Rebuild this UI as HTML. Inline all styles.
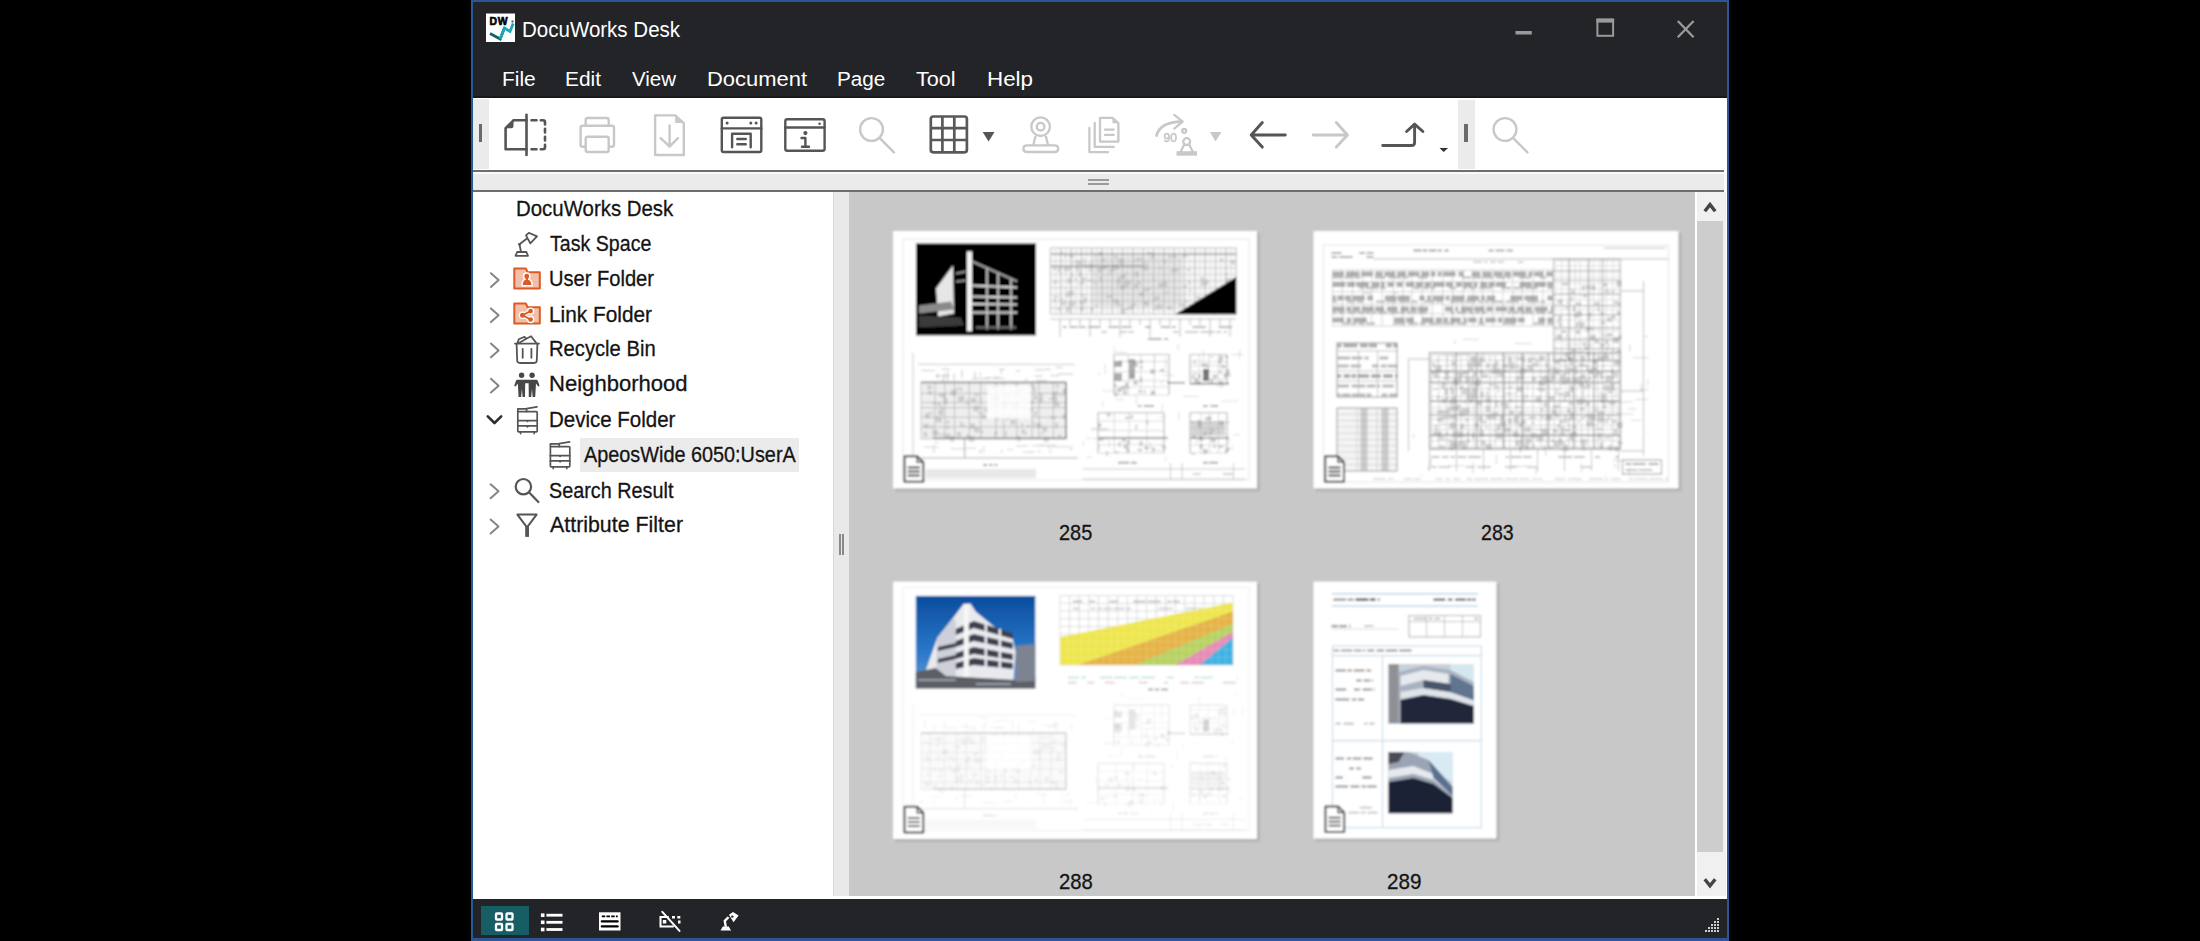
<!DOCTYPE html>
<html><head><meta charset="utf-8"><title>DocuWorks Desk</title>
<style>
html,body{margin:0;padding:0;}
body{width:2200px;height:941px;background:#000;position:relative;overflow:hidden;font-family:"Liberation Sans",sans-serif;}
.b{position:absolute;}
.t{position:absolute;font-family:"Liberation Sans",sans-serif;line-height:1;white-space:nowrap;transform-origin:0 0;}
svg{position:absolute;left:0;top:0;}
</style></head><body>
<div class="b" style="left:471px;top:0;width:1258px;height:941px;background:#2b5797"></div>
<div class="b" style="left:473px;top:2px;width:1254px;height:96px;background:#222428"></div>
<div class="b" style="left:473px;top:96px;width:1254px;height:2px;background:#18191c"></div>
<div class="b" style="left:473px;top:98px;width:1254px;height:72px;background:#fff"></div>
<div class="b" style="left:473px;top:99px;width:16px;height:70px;background:#ebebeb"></div>
<div class="b" style="left:479px;top:124px;width:3px;height:18px;background:#6a6a6a"></div>
<div class="b" style="left:1458px;top:100px;width:17px;height:69px;background:#ebebeb"></div>
<div class="b" style="left:1464px;top:124px;width:4px;height:18px;background:#6a6a6a"></div>
<div class="b" style="left:473px;top:170px;width:1251px;height:2px;background:#6e6e6e"></div>
<div class="b" style="left:473px;top:172px;width:1254px;height:2px;background:#fafafa"></div>
<div class="b" style="left:473px;top:174px;width:1252px;height:16px;background:#ebebeb"></div>
<div class="b" style="left:1088px;top:179px;width:21px;height:2px;background:#9a9a9a"></div>
<div class="b" style="left:1088px;top:183px;width:21px;height:2px;background:#9a9a9a"></div>
<div class="b" style="left:473px;top:190px;width:1251px;height:2px;background:#6e6e6e"></div>
<div class="b" style="left:1724px;top:170px;width:3px;height:22px;background:#fafafa"></div>
<div class="b" style="left:473px;top:192px;width:360px;height:707px;background:#fff"></div>
<div class="b" style="left:833px;top:192px;width:1px;height:704px;background:#d8d8d8"></div>
<div class="b" style="left:834px;top:192px;width:15px;height:704px;background:#e9e9e9"></div>
<div class="b" style="left:839px;top:534px;width:2px;height:21px;background:#8a8a8a"></div>
<div class="b" style="left:842px;top:534px;width:2px;height:21px;background:#8a8a8a"></div>
<div class="b" style="left:849px;top:192px;width:846px;height:704px;background:#c8c8c8"></div>
<div class="b" style="left:1695px;top:192px;width:32px;height:704px;background:#fff"></div>
<div class="b" style="left:1697px;top:192px;width:29px;height:704px;background:#f0f0f0"></div>
<div class="b" style="left:1697px;top:221px;width:26px;height:631px;background:#cdcdcd"></div>
<div class="b" style="left:473px;top:896px;width:1254px;height:3px;background:#fff"></div>
<div class="b" style="left:473px;top:899px;width:1254px;height:39px;background:#222428"></div>
<div class="b" style="left:481px;top:906px;width:48px;height:29px;background:#175d64"></div>
<div class="b" style="left:580px;top:438px;width:219px;height:34px;background:#ebebeb"></div>
<div class="t" style="left:522.36px;top:19.00px;font-size:22px;color:#ffffff;transform:scaleX(0.9324);">DocuWorks Desk</div>
<div class="t" style="left:501.62px;top:69.00px;font-size:20px;color:#ffffff;transform:scaleX(1.0470);">File</div>
<div class="t" style="left:564.63px;top:69.00px;font-size:20px;color:#ffffff;transform:scaleX(1.0457);">Edit</div>
<div class="t" style="left:632.29px;top:69.00px;font-size:20px;color:#ffffff;transform:scaleX(1.0257);">View</div>
<div class="t" style="left:706.74px;top:69.00px;font-size:20px;color:#ffffff;transform:scaleX(1.0973);">Document</div>
<div class="t" style="left:837.35px;top:69.00px;font-size:20px;color:#ffffff;transform:scaleX(1.0339);">Page</div>
<div class="t" style="left:915.97px;top:69.00px;font-size:20px;color:#ffffff;transform:scaleX(1.0800);">Tool</div>
<div class="t" style="left:986.51px;top:69.00px;font-size:20px;color:#ffffff;transform:scaleX(1.1192);">Help</div>
<div class="t" style="left:515.77px;top:198.00px;font-size:22.5px;color:#141414;transform:scaleX(0.9070);-webkit-text-stroke:0.3px #141414;">DocuWorks Desk</div>
<div class="t" style="left:549.61px;top:233.00px;font-size:22.5px;color:#141414;transform:scaleX(0.8715);-webkit-text-stroke:0.3px #141414;">Task Space</div>
<div class="t" style="left:548.89px;top:268.00px;font-size:22.5px;color:#141414;transform:scaleX(0.8932);-webkit-text-stroke:0.3px #141414;">User Folder</div>
<div class="t" style="left:548.93px;top:304.00px;font-size:22.5px;color:#141414;transform:scaleX(0.9255);-webkit-text-stroke:0.3px #141414;">Link Folder</div>
<div class="t" style="left:548.98px;top:338.00px;font-size:22.5px;color:#141414;transform:scaleX(0.8976);-webkit-text-stroke:0.3px #141414;">Recycle Bin</div>
<div class="t" style="left:548.83px;top:373.00px;font-size:22.5px;color:#141414;transform:scaleX(0.9808);-webkit-text-stroke:0.3px #141414;">Neighborhood</div>
<div class="t" style="left:548.66px;top:409.00px;font-size:22.5px;color:#141414;transform:scaleX(0.9109);-webkit-text-stroke:0.3px #141414;">Device Folder</div>
<div class="t" style="left:583.60px;top:444.00px;font-size:22.5px;color:#141414;transform:scaleX(0.8818);-webkit-text-stroke:0.3px #141414;">ApeosWide 6050:UserA</div>
<div class="t" style="left:549.01px;top:480.00px;font-size:22.5px;color:#141414;transform:scaleX(0.8803);-webkit-text-stroke:0.3px #141414;">Search Result</div>
<div class="t" style="left:550.20px;top:514.00px;font-size:22.5px;color:#141414;transform:scaleX(0.9497);-webkit-text-stroke:0.3px #141414;">Attribute Filter</div>
<div class="t" style="left:1059.20px;top:522.00px;font-size:22.5px;color:#141414;transform:scaleX(0.8861);-webkit-text-stroke:0.3px #141414;">285</div>
<div class="t" style="left:1480.52px;top:522.00px;font-size:22.5px;color:#141414;transform:scaleX(0.8691);-webkit-text-stroke:0.3px #141414;">283</div>
<div class="t" style="left:1058.99px;top:871.00px;font-size:22.5px;color:#141414;transform:scaleX(0.9001);-webkit-text-stroke:0.3px #141414;">288</div>
<div class="t" style="left:1387.47px;top:871.00px;font-size:22.5px;color:#141414;transform:scaleX(0.9172);-webkit-text-stroke:0.3px #141414;">289</div>
<svg width="2200" height="941" viewBox="0 0 2200 941">
<defs><filter id="bl" x="-5%" y="-5%" width="110%" height="110%"><feGaussianBlur stdDeviation="1.0"/></filter></defs>
<g filter="url(#bl)">
<rect x="895" y="233" width="364" height="257.5" fill="#a2a2a2"/>
<rect x="896" y="234" width="364" height="257.5" fill="#b4b4b4" opacity="0.6"/>
<rect x="893" y="231" width="364" height="257.5" fill="#fff"/>
<g transform="translate(893 231)">
<rect x="10" y="8" width="346" height="241" fill="none" stroke="#e6e6e6" stroke-width="1"/>
<rect x="23" y="12.4" width="120" height="92" fill="#050505"/>
<g transform="translate(23 12.4)"><path d="M20 45 L37 22 L38 70 L22 73 Z" fill="#e6e6e6"/><path d="M3 62 L35 58 L38 66 L3 70 Z" fill="#8a8a8a"/><path d="M3 72 L45 74 L48 82 L3 84 Z" fill="#3a3a3a"/><path d="M56 42 L101 44 M56 53 L101 54 M56 60.5 L101 61 M56 69 L101 69" stroke="#e0e0e0" stroke-width="2" fill="none"/><path d="M71 24 V86 M82 29 V86 M95 35 V86" stroke="#c8c8c8" stroke-width="1.8" fill="none"/><path d="M56 18 L101 38" stroke="#aaa" stroke-width="1.8" fill="none"/><rect x="51" y="8" width="5" height="80" fill="#f4f4f4"/><path d="M60 84 H100" stroke="#777" stroke-width="2"/><path d="M40 30 L50 28 M40 38 L50 37" stroke="#aaa" stroke-width="1.5"/></g>
<path d="M157.4 17.0V83.3M167.7 17.0V83.3M178.0 17.0V83.3M188.4 17.0V83.3M198.7 17.0V83.3M209.0 17.0V83.3M219.3 17.0V83.3M229.7 17.0V83.3M240.0 17.0V83.3M250.3 17.0V83.3M260.6 17.0V83.3M270.9 17.0V83.3M281.3 17.0V83.3M291.6 17.0V83.3M301.9 17.0V83.3M312.2 17.0V83.3M322.6 17.0V83.3M332.9 17.0V83.3M343.2 17.0V83.3M157.4 17.0H343.2M157.4 23.6H343.2M157.4 30.3H343.2M157.4 36.9H343.2M157.4 43.5H343.2M157.4 50.1H343.2M157.4 56.8H343.2M157.4 63.4H343.2M157.4 70.0H343.2M157.4 76.7H343.2M157.4 83.3H343.2" stroke="#9a9a9a" stroke-width="0.7" opacity="0.75" fill="none"/>
<path d="M157.4 17.0V83.3M162.6 17.0V83.3M167.7 17.0V83.3M172.9 17.0V83.3M178.0 17.0V83.3M183.2 17.0V83.3M188.4 17.0V83.3M193.5 17.0V83.3M198.7 17.0V83.3M203.8 17.0V83.3M209.0 17.0V83.3M214.2 17.0V83.3M219.3 17.0V83.3M224.5 17.0V83.3M229.7 17.0V83.3M234.8 17.0V83.3M240.0 17.0V83.3M245.1 17.0V83.3M250.3 17.0V83.3M255.5 17.0V83.3M260.6 17.0V83.3M265.8 17.0V83.3M270.9 17.0V83.3M276.1 17.0V83.3M281.3 17.0V83.3M286.4 17.0V83.3M291.6 17.0V83.3M296.8 17.0V83.3M301.9 17.0V83.3M307.1 17.0V83.3M312.2 17.0V83.3M317.4 17.0V83.3M322.6 17.0V83.3M327.7 17.0V83.3M332.9 17.0V83.3M338.0 17.0V83.3M343.2 17.0V83.3M157.4 17.0H343.2M157.4 20.3H343.2M157.4 23.6H343.2M157.4 26.9H343.2M157.4 30.3H343.2M157.4 33.6H343.2M157.4 36.9H343.2M157.4 40.2H343.2M157.4 43.5H343.2M157.4 46.8H343.2M157.4 50.1H343.2M157.4 53.5H343.2M157.4 56.8H343.2M157.4 60.1H343.2M157.4 63.4H343.2M157.4 66.7H343.2M157.4 70.0H343.2M157.4 73.4H343.2M157.4 76.7H343.2M157.4 80.0H343.2M157.4 83.3H343.2" stroke="#b0b0b0" stroke-width="0.5" opacity="0.6" fill="none"/>
<path d="M190.2 27.0h1.8v5.0h-1.8zM183.3 34.9h3.3v5.4h-3.3zM174.5 47.0h4.0v5.5h-4.0zM307.5 71.8h2.8v3.4h-2.8zM224.6 73.1h5.8v2.2h-5.8zM191.7 33.9h2.6v3.7h-2.6zM266.0 35.8h1.5v3.4h-1.5zM226.5 54.0h5.8v4.6h-5.8zM252.8 57.1h4.5v1.7h-4.5zM321.9 66.8h5.4v5.1h-5.4zM230.6 43.9h2.0v4.4h-2.0zM171.2 24.0h2.4v2.2h-2.4zM221.2 23.2h1.5v2.2h-1.5zM178.3 41.8h1.6v5.4h-1.6zM270.5 28.9h2.6v3.1h-2.6zM225.5 27.4h5.3v6.0h-5.3zM243.9 49.0h1.9v2.0h-1.9zM221.7 35.9h5.2v2.2h-5.2zM164.2 77.1h3.9v2.2h-3.9zM257.8 21.6h3.9v5.9h-3.9zM315.4 61.8h2.7v3.2h-2.7zM190.1 66.3h3.9v5.0h-3.9zM219.3 33.4h5.2v5.9h-5.2zM313.5 68.4h5.2v4.8h-5.2zM200.8 51.1h3.1v1.6h-3.1zM165.0 36.8h2.7v4.6h-2.7zM332.2 46.8h5.7v5.9h-5.7zM331.9 41.9h2.5v2.5h-2.5zM195.4 32.3h4.3v5.6h-4.3zM311.3 48.8h4.4v5.1h-4.4zM175.3 59.6h5.6v5.0h-5.6zM295.0 48.7h2.3v5.1h-2.3zM219.9 68.0h5.9v3.3h-5.9zM232.2 76.8h4.8v2.3h-4.8zM182.9 29.1h5.6v5.1h-5.6zM186.3 69.6h5.9v4.5h-5.9zM223.1 52.9h2.1v1.6h-2.1zM334.8 59.0h3.9v5.7h-3.9zM238.1 72.3h5.2v2.4h-5.2zM205.3 37.6h2.6v4.1h-2.6zM206.7 45.1h2.1v5.6h-2.1zM223.7 47.5h4.1v5.6h-4.1zM235.7 75.1h3.8v3.9h-3.8zM254.2 21.1h3.5v2.3h-3.5zM160.7 68.0h2.3v3.6h-2.3zM290.5 53.4h3.0v3.8h-3.0zM260.0 67.1h2.0v4.0h-2.0zM204.7 36.6h5.0v3.8h-5.0zM261.1 65.6h5.6v3.5h-5.6zM270.3 50.3h3.8v4.6h-3.8zM241.4 52.0h3.7v5.7h-3.7zM285.9 72.6h5.7v2.7h-5.7zM260.7 76.6h5.3v2.1h-5.3zM181.9 46.5h1.8v2.6h-1.8zM173.2 60.2h5.0v5.5h-5.0zM187.8 63.0h4.5v2.1h-4.5zM318.9 78.1h2.5v5.8h-2.5zM231.7 49.2h6.0v5.2h-6.0zM189.1 45.9h3.8v3.0h-3.8zM195.2 39.1h4.7v1.6h-4.7zM259.7 46.4h1.6v3.0h-1.6zM272.3 50.7h1.8v5.9h-1.8zM301.9 78.3h2.0v2.7h-2.0zM167.1 66.7h2.7v2.1h-2.7zM236.0 74.7h5.2v2.7h-5.2zM186.9 75.2h4.1v4.7h-4.1zM176.1 23.5h4.6v3.4h-4.6zM173.0 76.3h4.4v5.1h-4.4zM175.1 71.4h1.8v5.4h-1.8zM241.7 40.3h4.0v5.7h-4.0zM208.2 27.8h3.9v2.6h-3.9zM179.7 29.7h1.7v2.4h-1.7zM216.2 38.3h4.9v2.8h-4.9zM250.0 30.7h3.1v1.6h-3.1zM205.1 20.9h4.8v4.0h-4.8zM194.1 48.5h5.7v2.0h-5.7zM307.4 45.9h3.7v5.3h-3.7zM230.8 50.4h4.6v5.9h-4.6zM221.7 69.9h4.7v4.4h-4.7zM232.8 40.9h1.7v2.1h-1.7zM172.7 64.5h2.7v2.2h-2.7zM175.2 70.5h5.4v4.5h-5.4zM210.7 34.5h2.8v3.6h-2.8zM188.4 46.7h2.7v5.8h-2.7zM335.1 52.8h2.6v5.8h-2.6zM215.7 41.4h1.5v3.2h-1.5zM245.4 50.2h2.4v3.8h-2.4zM160.9 35.9h1.9v3.3h-1.9zM167.5 21.3h2.9v2.5h-2.9zM265.4 51.8h4.9v4.5h-4.9zM288.9 72.7h3.3v3.0h-3.3zM337.3 29.0h4.8v4.4h-4.8zM167.9 70.1h5.5v4.3h-5.5zM292.1 68.7h2.1v3.9h-2.1zM250.8 70.1h5.1v5.2h-5.1zM265.1 73.6h4.6v4.6h-4.6zM201.4 21.9h2.1v3.1h-2.1zM178.9 70.1h4.0v4.3h-4.0zM272.7 60.8h3.7v1.5h-3.7zM303.6 64.9h3.8v3.9h-3.8zM278.7 24.0h4.8v2.6h-4.8zM173.4 35.9h4.8v2.4h-4.8zM293.2 78.5h3.7v3.2h-3.7zM246.2 61.0h5.0v4.3h-5.0zM275.7 24.6h2.2v2.6h-2.2zM293.8 38.3h4.1v1.6h-4.1zM170.9 36.1h4.5v4.6h-4.5zM281.6 37.5h3.8v3.6h-3.8zM243.9 27.1h5.5v2.4h-5.5zM336.1 76.2h1.6v3.6h-1.6zM307.6 78.1h3.5v2.7h-3.5zM197.8 76.7h2.4v4.1h-2.4zM185.5 51.4h5.8v2.1h-5.8zM307.6 50.5h5.5v4.7h-5.5zM201.6 73.9h3.7v1.6h-3.7zM160.6 49.5h3.5v2.9h-3.5zM185.3 40.6h2.9v5.3h-2.9zM160.3 65.0h5.3v2.0h-5.3zM326.8 62.8h5.6v2.8h-5.6zM227.0 43.6h6.0v4.2h-6.0zM224.9 45.7h2.7v1.7h-2.7zM178.3 70.1h2.8v5.7h-2.8zM204.9 35.9h3.8v2.4h-3.8zM227.2 77.4h5.5v5.2h-5.5zM273.6 74.8h5.7v4.0h-5.7zM289.5 23.0h4.8v3.5h-4.8zM295.5 58.7h2.8v1.7h-2.8zM326.8 27.6h3.6v3.0h-3.6zM213.6 64.3h5.9v2.7h-5.9zM278.1 38.1h4.0v3.3h-4.0zM190.1 29.7h2.4v5.6h-2.4zM249.5 33.2h5.6v6.0h-5.6zM241.0 28.4h2.4v1.9h-2.4zM221.6 25.5h2.6v2.7h-2.6zM262.5 73.2h4.9v3.4h-4.9zM234.5 51.5h3.2v3.0h-3.2zM171.2 36.7h5.9v2.1h-5.9zM250.6 57.8h5.4v2.5h-5.4zM208.8 34.9h3.3v3.5h-3.3zM331.7 70.9h5.4v1.6h-5.4z" fill="#777" opacity="0.25"/>
<rect x="200" y="25" width="90" height="50" fill="#999" opacity="0.18"/>
<path d="M157 88 H343 M167 88 V106 M177 88 V94 M187 88 V94 M197 88 V106 M207 88 V94 M217 88 V94 M227 88 V106 M237 88 V94 M247 88 V94 M257 88 V106 M267 88 V94 M277 88 V94 M287 88 V106 M297 88 V94 M307 88 V94 M317 88 V106 M327 88 V94 M337 88 V106" stroke="#999" stroke-width="0.8" opacity="0.8"/>
<path d="M282.4 83.3 L343.2 83.3 L343.2 46 Z" fill="#050505"/>
<path d="M158 23 H343 M158 35 H250" stroke="#666" stroke-width="1.3" opacity="0.5"/>
<path d="M170.0 96.0h3.4M176.1 96.0h8.2M185.4 96.0h7.3M195.3 96.0h12.4M215.5 96.0h10.5M228.4 96.0h10.1M252.1 96.0h5.6M267.8 96.0h10.0M279.0 96.0h3.8M299.4 96.0h13.5M325.5 96.0h13.6" stroke="#999" stroke-width="2.2" opacity="0.7" fill="none"/>
<path d="M208.3 101.0h5.2M227.4 101.0h6.4M235.3 101.0h5.4M280.2 101.0h5.3M292.2 101.0h12.9M307.5 101.0h14.0M323.2 101.0h5.0M330.7 101.0h3.4" stroke="#aaa" stroke-width="1.8" opacity="0.6" fill="none"/>
<path d="M255.0 108.0h13.5M271.4 108.0h3.6" stroke="#999" stroke-width="2" opacity="0.8" fill="none"/>
<path d="M25 133.4 H182 M20 122 V226" stroke="#bbb" stroke-width="1" opacity="0.80" fill="none"/>
<rect x="28" y="151" width="145" height="57" fill="#b8b8b8" opacity="0.22"/>
<path d="M28.0 151.0V208.0M42.0 151.0V208.0M51.8 151.0V208.0M61.5 151.0V208.0M76.2 151.0V208.0M87.7 151.0V208.0M103.0 151.0V208.0M110.7 151.0V208.0M123.9 151.0V208.0M139.1 151.0V208.0M146.0 151.0V208.0M160.4 151.0V208.0M173.0 151.0V208.0M28.0 151.0H173.0M28.0 162.4H173.0M28.0 171.6H173.0M28.0 176.7H173.0M28.0 186.2H173.0M28.0 195.9H173.0M28.0 208.0H173.0" stroke="#999" stroke-width="0.8" opacity="0.7" fill="none"/>
<path d="M159.7 165.9h4.9v5.5h-4.9zM77.8 166.7h5.8v4.3h-5.8zM67.0 190.7h2.9v2.7h-2.9zM30.5 192.8h5.6v4.4h-5.6zM163.0 153.3h2.6v3.6h-2.6zM164.9 203.5h3.2v2.6h-3.2zM90.6 178.6h5.7v2.3h-5.7zM143.2 191.9h5.2v5.0h-5.2zM115.6 169.7h2.9v3.1h-2.9zM140.3 156.3h2.4v4.9h-2.4zM64.9 155.5h1.7v4.0h-1.7zM75.9 204.9h5.5v5.9h-5.5zM67.3 156.5h1.9v3.7h-1.9zM130.1 176.1h2.6v3.4h-2.6zM117.5 188.4h4.9v5.3h-4.9zM123.7 158.5h5.3v2.8h-5.3zM109.9 172.1h4.8v2.4h-4.8zM64.9 165.2h2.2v5.5h-2.2zM111.5 169.6h3.3v6.0h-3.3zM101.5 164.5h5.1v4.4h-5.1zM169.7 157.5h3.6v5.2h-3.6zM148.5 201.4h1.7v2.8h-1.7zM46.8 162.2h5.9v4.1h-5.9zM161.2 172.1h5.4v3.5h-5.4zM66.7 194.0h5.8v2.0h-5.8zM114.1 185.5h2.5v3.2h-2.5zM49.9 163.0h2.6v4.2h-2.6zM121.9 163.0h1.6v3.0h-1.6zM125.6 162.0h2.9v2.4h-2.9zM142.1 181.6h1.8v2.0h-1.8zM85.7 181.7h4.4v1.9h-4.4zM53.1 189.6h3.3v2.8h-3.3zM73.4 203.5h2.9v4.0h-2.9zM80.4 174.5h5.4v6.0h-5.4zM81.3 162.6h4.8v2.4h-4.8zM30.8 200.7h3.4v5.2h-3.4zM87.3 199.7h3.6v2.2h-3.6zM32.1 181.8h4.4v5.6h-4.4zM42.6 185.6h3.2v3.8h-3.2zM50.6 167.3h3.8v5.7h-3.8zM45.3 178.5h5.1v5.9h-5.1zM57.8 158.8h5.7v5.9h-5.7zM98.1 154.9h5.7v3.2h-5.7zM157.5 185.5h5.2v2.2h-5.2zM140.8 164.0h3.3v5.3h-3.3zM146.9 161.9h2.5v3.3h-2.5zM103.0 172.7h2.1v2.6h-2.1zM132.2 200.5h1.7v4.0h-1.7zM136.8 154.1h5.3v2.0h-5.3zM114.5 181.7h4.3v2.9h-4.3zM89.2 183.5h3.4v4.5h-3.4zM93.0 175.7h1.6v4.3h-1.6zM99.0 164.7h4.9v5.0h-4.9zM94.6 161.7h3.6v2.0h-3.6zM48.1 175.3h1.9v3.5h-1.9zM101.9 154.2h4.4v1.9h-4.4zM133.4 194.0h3.8v1.7h-3.8zM101.1 172.4h5.8v2.1h-5.8zM150.8 205.8h4.8v5.2h-4.8zM57.3 205.0h3.7v5.8h-3.7zM159.2 160.9h5.0v5.7h-5.0zM39.2 170.9h4.9v2.2h-4.9zM156.4 166.8h5.2v2.1h-5.2zM100.8 201.7h2.4v2.7h-2.4zM101.3 169.2h1.7v2.3h-1.7zM52.7 202.6h4.6v5.5h-4.6zM53.8 194.4h2.0v3.9h-2.0zM119.7 171.4h5.4v4.0h-5.4zM111.8 199.7h2.0v6.0h-2.0zM118.8 173.3h5.1v2.7h-5.1zM169.7 183.2h3.1v4.9h-3.1zM92.4 161.5h4.8v1.7h-4.8zM145.6 165.7h4.4v5.9h-4.4zM112.6 187.8h2.9v1.5h-2.9zM34.8 160.1h4.3v3.4h-4.3zM102.3 200.4h2.1v2.5h-2.1zM122.1 153.2h1.5v3.1h-1.5zM45.0 171.3h2.5v4.1h-2.5zM113.1 163.0h4.3v3.6h-4.3zM49.0 202.6h2.6v2.2h-2.6zM43.5 186.5h5.4v5.0h-5.4zM86.7 166.3h1.6v4.4h-1.6zM109.3 170.9h4.4v3.5h-4.4zM162.1 191.6h2.6v5.6h-2.6zM36.2 180.7h3.3v2.6h-3.3zM38.2 194.1h1.6v4.0h-1.6zM162.7 159.7h2.4v4.2h-2.4zM101.5 186.6h5.2v2.3h-5.2zM73.6 168.2h1.7v5.5h-1.7zM140.4 190.6h1.5v5.3h-1.5zM135.1 177.1h4.8v3.5h-4.8zM61.9 157.7h2.5v1.7h-2.5zM77.3 192.5h4.6v5.3h-4.6zM130.3 166.4h4.0v3.5h-4.0zM141.2 180.3h2.7v4.4h-2.7zM166.1 163.7h5.5v1.6h-5.5zM66.7 164.7h4.8v5.8h-4.8zM135.2 169.7h5.5v3.0h-5.5zM63.7 201.0h4.3v4.6h-4.3zM123.8 204.9h3.6v5.3h-3.6zM128.4 198.3h3.5v4.8h-3.5zM110.4 168.6h2.5v4.3h-2.5zM41.0 201.2h2.2v1.6h-2.2zM45.0 202.2h3.1v2.1h-3.1zM34.1 154.2h4.6v4.4h-4.6zM128.3 191.8h1.8v4.2h-1.8zM81.2 196.1h5.2v5.5h-5.2zM39.3 198.9h5.6v5.7h-5.6zM45.1 163.1h2.0v1.7h-2.0zM149.5 195.8h4.4v5.2h-4.4z" fill="#808080" opacity="0.3"/>
<rect x="94" y="154.6" width="44" height="33" fill="#fff" opacity="0.85"/>
<path d="M28 151.5 H173 M40 207.3 H173 M173 151 V208" stroke="#6a6a6a" stroke-width="1.6" opacity="0.75" fill="none"/>
<path d="M122.9 140.0h4.5M142.4 138.9h9.4M28.2 139.6h13.7M82.0 140.5v7.8M157.0 144.7h9.2M92.6 146.8h13.6M108.4 139.0v3.9M152.1 138.4h6.0M143.1 149.7h10.4M101.2 147.2h10.4M78.8 147.6h17.2M69.0 139.0v7.8M42.0 144.9h14.8M133.1 147.0v3.0M87.2 141.5v3.8M162.7 136.4h6.9M164.7 143.0h15.3M61.2 142.5v7.5M141.7 145.0h7.9M49.1 147.8v2.2M51.3 142.1v7.9M44.5 142.5v5.3M54.7 140.2v9.8M49.0 138.2h7.9M105.9 138.3h5.8" stroke="#999" stroke-width="0.8" opacity="0.7" fill="none"/>
<path d="M176.1 218.5h3.9M40.8 214.0v8.0M138.7 214.7h12.6M41.6 211.7h3.5M86.8 219.3v2.7M123.0 215.0h12.1M87.7 218.6v3.4M114.0 218.7h6.4M136.9 220.4v1.6M157.1 217.8v4.2M73.5 217.2h9.3M146.3 218.3v3.7M90.7 214.9v6.9M129.7 221.1h12.8M145.6 214.1h17.6M30.9 216.1h14.7M170.8 215.7h9.2M108.9 218.3v3.7M153.5 215.8h17.2M57.6 217.9h14.4" stroke="#aaa" stroke-width="0.8" opacity="0.7" fill="none"/>
<path d="M28 227 H185 M71.6 207 V227" stroke="#999" stroke-width="1.2" opacity="0.80" fill="none"/>
<path d="M90.0 234.0h4.3M96.1 234.0h3.6M101.5 234.0h3.1" stroke="#999" stroke-width="2" opacity="0.8" fill="none"/>
<rect x="33" y="238" width="110" height="9" fill="#e2e2e2" opacity="0.80"/>
<path d="M221 123.5 H276 M221 123.5 V164 M276 123.5 V164" stroke="#aaa" stroke-width="0.9" opacity="0.80" fill="none"/>
<path d="M221.0 123.5V164.0M235.5 123.5V164.0M247.9 123.5V164.0M261.3 123.5V164.0M276.0 123.5V164.0M221.0 123.5H276.0M221.0 130.5H276.0M221.0 140.7H276.0M221.0 149.6H276.0M221.0 156.0H276.0M221.0 164.0H276.0" stroke="#b5b5b5" stroke-width="0.7" opacity="0.7" fill="none"/>
<path d="M233.0 156.0h2.9v2.2h-2.9zM228.1 155.0h4.3v3.7h-4.3zM246.8 146.3h2.3v4.9h-2.3zM240.4 149.4h4.4v4.4h-4.4zM246.7 135.4h3.4v1.9h-3.4zM266.9 137.9h4.5v2.4h-4.5zM241.7 133.8h3.0v2.2h-3.0zM221.1 152.7h2.5v2.4h-2.5zM237.6 142.9h3.0v3.7h-3.0zM257.3 138.2h4.8v4.5h-4.8zM224.1 157.0h4.7v4.2h-4.7zM228.7 157.2h3.7v1.6h-3.7zM221.6 162.0h3.8v2.4h-3.8zM226.6 129.3h2.3v4.2h-2.3zM240.1 129.7h4.7v4.3h-4.7zM230.2 159.6h3.6v4.2h-3.6zM257.8 159.7h4.3v4.4h-4.3zM231.9 151.6h3.4v4.1h-3.4zM245.1 159.2h3.4v2.4h-3.4zM233.9 129.1h3.2v1.7h-3.2zM246.7 129.3h3.2v3.2h-3.2zM250.7 158.4h1.5v4.4h-1.5z" fill="#777" opacity="0.4"/>
<path d="M297 123.5 H334 M297 123.5 V152.6 M334 123.5 V152.6" stroke="#aaa" stroke-width="0.9" opacity="0.80" fill="none"/>
<path d="M297.0 123.5V152.6M306.1 123.5V152.6M315.8 123.5V152.6M325.4 123.5V152.6M334.0 123.5V152.6M297.0 123.5H334.0M297.0 130.7H334.0M297.0 134.6H334.0M297.0 140.6H334.0M297.0 148.6H334.0M297.0 152.6H334.0" stroke="#b5b5b5" stroke-width="0.7" opacity="0.7" fill="none"/>
<path d="M299.8 142.0h3.7v1.6h-3.7zM319.6 143.4h4.8v2.7h-4.8zM333.3 138.4h3.2v4.6h-3.2zM298.3 144.4h3.7v2.7h-3.7zM328.9 134.2h3.2v3.3h-3.2zM325.5 129.6h3.0v3.0h-3.0zM317.5 147.6h2.5v4.4h-2.5zM311.9 138.2h2.5v3.3h-2.5zM333.1 142.5h4.3v2.7h-4.3zM308.7 132.2h3.6v3.7h-3.6zM326.0 124.7h4.0v4.6h-4.0zM317.2 124.9h2.6v1.5h-2.6zM304.0 150.3h3.6v3.8h-3.6zM326.2 150.0h3.6v3.7h-3.6zM320.2 143.8h3.6v3.9h-3.6zM304.9 142.9h3.1v4.2h-3.1zM300.8 128.8h1.6v4.2h-1.6zM330.8 142.6h2.8v4.4h-2.8zM326.1 139.9h2.4v2.6h-2.4zM312.6 132.8h3.0v3.7h-3.0zM331.6 125.1h3.5v1.6h-3.5zM301.4 147.1h3.5v4.7h-3.5z" fill="#777" opacity="0.4"/>
<path d="M205 181.7 H271 M205 181.7 V222 M271 181.7 V222" stroke="#aaa" stroke-width="0.9" opacity="0.80" fill="none"/>
<path d="M205.0 181.7V222.0M221.3 181.7V222.0M236.1 181.7V222.0M254.0 181.7V222.0M271.0 181.7V222.0M205.0 181.7H271.0M205.0 190.1H271.0M205.0 199.6H271.0M205.0 207.8H271.0M205.0 213.8H271.0M205.0 222.0H271.0" stroke="#b5b5b5" stroke-width="0.7" opacity="0.7" fill="none"/>
<path d="M232.2 185.8h3.8v2.2h-3.8zM215.0 182.3h1.5v3.9h-1.5zM213.0 220.6h1.8v4.5h-1.8zM213.5 182.4h4.0v2.3h-4.0zM253.4 189.3h1.7v4.2h-1.7zM252.1 216.2h4.1v1.8h-4.1zM246.5 210.3h3.1v4.8h-3.1zM221.8 220.6h4.0v1.5h-4.0zM206.0 207.9h4.4v1.8h-4.4zM225.5 211.1h2.1v4.5h-2.1zM237.1 184.1h2.8v3.5h-2.8zM234.0 209.0h2.0v4.3h-2.0zM229.0 207.7h3.7v3.0h-3.7zM230.5 213.4h4.8v4.2h-4.8zM242.4 193.5h1.7v4.9h-1.7zM251.4 215.0h2.7v3.6h-2.7zM269.5 215.2h3.6v2.6h-3.6zM233.3 217.5h2.8v3.9h-2.8zM244.7 217.8h4.3v2.5h-4.3zM205.1 192.3h3.0v3.6h-3.0zM258.9 217.5h1.6v4.4h-1.6zM258.6 216.6h3.5v2.5h-3.5z" fill="#777" opacity="0.4"/>
<path d="M297 181.7 H334 M297 181.7 V222 M334 181.7 V222" stroke="#aaa" stroke-width="0.9" opacity="0.80" fill="none"/>
<path d="M297.0 181.7V222.0M307.7 181.7V222.0M316.7 181.7V222.0M325.5 181.7V222.0M334.0 181.7V222.0M297.0 181.7H334.0M297.0 191.4H334.0M297.0 197.2H334.0M297.0 204.2H334.0M297.0 214.2H334.0M297.0 222.0H334.0" stroke="#b5b5b5" stroke-width="0.7" opacity="0.7" fill="none"/>
<path d="M326.5 189.8h4.1v4.8h-4.1zM305.7 206.2h3.9v3.1h-3.9zM304.6 192.0h4.1v4.3h-4.1zM314.0 185.2h4.3v4.2h-4.3zM305.6 205.1h4.6v4.6h-4.6zM316.3 200.9h3.6v2.2h-3.6zM304.1 189.0h4.0v2.8h-4.0zM317.9 197.9h3.3v2.0h-3.3zM298.6 221.9h2.8v1.9h-2.8zM320.4 213.4h2.0v3.6h-2.0zM309.8 202.6h1.6v1.6h-1.6zM333.6 216.6h3.2v3.5h-3.2zM306.7 213.1h3.0v4.8h-3.0zM325.4 214.7h4.9v2.4h-4.9zM298.4 189.8h2.1v1.8h-2.1zM298.9 204.2h4.5v3.1h-4.5zM332.0 218.4h1.7v3.6h-1.7zM311.7 186.5h4.9v2.4h-4.9zM317.9 207.5h4.8v3.8h-4.8zM311.5 199.8h2.1v4.9h-2.1zM333.7 190.6h1.6v2.4h-1.6zM310.0 218.1h4.7v4.4h-4.7z" fill="#777" opacity="0.4"/>
<path d="M221 130 h8 v6 h-8z M221 142 h8 v8 h-8z M236 128 h6 v20 h-6z" fill="#777" opacity="0.60"/>
<path d="M310 138 h6 v12 h-6z" fill="#555" opacity="0.80"/>
<path d="M274 151.8 H292 M297 152.6 H336 M205 206.7 H275 M297 207 H336" stroke="#666" stroke-width="1.6" opacity="0.70" fill="none"/>
<path d="M298 190 h34 v14 h-34z" fill="#999" opacity="0.40"/>
<path d="M245.0 175.0h3.5M250.9 175.0h10.1" stroke="#999" stroke-width="2" opacity="0.8" fill="none"/>
<path d="M310.0 175.0h4.6M317.5 175.0h7.5" stroke="#999" stroke-width="2" opacity="0.8" fill="none"/>
<path d="M225.0 231.8h11.3M238.0 231.8h5.8" stroke="#999" stroke-width="2" opacity="0.8" fill="none"/>
<path d="M310.0 231.8h4.9M316.1 231.8h8.9" stroke="#999" stroke-width="2" opacity="0.8" fill="none"/>
<path d="M221.2 116.2v5.1M339.4 214.3v4.3M261.6 123.4v11.1M290.5 165.4h15.3M266.4 186.1h6.3M199.1 196.2v4.4M329.3 143.4h5.3M233.4 211.1h5.5M268.6 149.5v4.1M346.6 118.7v9.4M223.8 168.3h6.9M222.3 155.0v12.6M338.0 123.5h12.0M199.2 197.7h17.7M192.6 207.2h5.1M190.3 210.2v4.8M259.6 219.6h11.6M212.1 133.3v9.8M221.5 121.4h12.1M269.3 144.3h12.2M303.2 207.8v4.9M200.5 198.5h13.8M198.9 207.7h15.6M328.3 170.2h16.7M266.3 214.9h5.8M323.1 155.3h8.6M285.2 112.5v7.3M272.5 126.3v10.8M328.5 149.9v6.7M310.2 119.2v12.2M269.2 172.6v8.2M193.3 226.2h5.7M206.4 141.6v3.3M205.4 194.5h3.3M285.9 180.0v9.7M206.5 214.6v3.4M209.7 170.2v5.7M209.5 159.9h11.9M327.8 129.4v10.2M216.3 209.5v6.7M257.3 211.1v6.8M340.6 203.7h6.6M243.6 163.4v10.7M336.0 208.2v3.5M272.8 225.0v5.0" stroke="#aaa" stroke-width="0.7" opacity="0.6" fill="none"/>
<path d="M190 238 H352 M190 248 H352 M277.5 232 V249 M289 232 V249 M340.5 232 V249" stroke="#bbb" stroke-width="1" opacity="0.80" fill="none"/>
<path d="M300.0 243.0h7.6M329.9 243.0h10.1" stroke="#aaa" stroke-width="1.6" opacity="0.7" fill="none"/>
</g>
<g transform="translate(903.3 455)"><path d="M1.2 1.2 H14 L20 7.2 V26.8 H1.2 Z" fill="#fff" stroke="#444" stroke-width="2" stroke-linejoin="round"/><path d="M14 1.2 V7.2 H20" fill="none" stroke="#444" stroke-width="1.6"/><path d="M4.5 12.5 H16.5 M4.5 16.5 H16.5 M4.5 20.5 H16.5" stroke="#444" stroke-width="1.8"/></g>
<rect x="1315.5" y="233" width="365" height="257.5" fill="#a2a2a2"/>
<rect x="1316.5" y="234" width="365" height="257.5" fill="#b4b4b4" opacity="0.6"/>
<rect x="1313.5" y="231" width="365" height="257.5" fill="#fff"/>
<g transform="translate(1313.5 231)">
<rect x="10" y="14" width="345" height="237" fill="none" stroke="#e4e4e4" stroke-width="1"/>
<path d="M18.0 22.0h10.0M45.7 22.0h5.9M53.2 22.0h6.8" stroke="#999" stroke-width="2" opacity="0.8" fill="none"/>
<path d="M18.0 26.0h5.8M25.6 26.0h13.5M53.0 26.0h7.0" stroke="#999" stroke-width="2" opacity="0.8" fill="none"/>
<path d="M60 28 H355 M290 17 H352" stroke="#aaa" stroke-width="1" opacity="0.8"/>
<path d="M100.0 19.5h8.1M109.4 19.5h4.4M115.4 19.5h7.5M124.3 19.5h4.0M131.0 19.5h4.0" stroke="#888" stroke-width="2" opacity="0.8" fill="none"/>
<path d="M175.0 19.5h5.2M182.1 19.5h9.0M193.1 19.5h6.4" stroke="#999" stroke-width="2" opacity="0.8" fill="none"/>
<path d="M160.0 31.0h8.6M170.8 31.0h3.1M176.7 31.0h5.6M184.3 31.0h6.1M204.6 31.0h5.4" stroke="#aaa" stroke-width="1.5" opacity="0.7" fill="none"/>
<path d="M19.0 39.0V95.0M28.8 39.0V95.0M38.9 39.0V95.0M49.5 39.0V95.0M58.2 39.0V95.0M68.5 39.0V95.0M79.9 39.0V95.0M89.5 39.0V95.0M98.3 39.0V95.0M108.7 39.0V95.0M118.7 39.0V95.0M129.4 39.0V95.0M139.2 39.0V95.0M149.7 39.0V95.0M159.6 39.0V95.0M169.0 39.0V95.0M179.5 39.0V95.0M189.5 39.0V95.0M199.5 39.0V95.0M209.0 39.0V95.0M219.6 39.0V95.0M229.4 39.0V95.0M239.0 39.0V95.0M19.0 39.0H239.0M19.0 51.0H239.0M19.0 60.7H239.0M19.0 73.3H239.0M19.0 82.8H239.0M19.0 95.0H239.0" stroke="#aaa" stroke-width="0.7" opacity="0.7" fill="none"/>
<path d="M19.0 43.0h11.4M32.4 43.0h13.6M47.8 43.0h11.6M61.7 43.0h7.2M70.8 43.0h11.0M83.5 43.0h9.1M94.3 43.0h11.7M107.9 43.0h7.9M117.4 43.0h4.6M124.2 43.0h4.0M129.8 43.0h12.3M145.0 43.0h5.2M158.3 43.0h8.5M169.3 43.0h8.9M180.3 43.0h8.7M190.7 43.0h6.9M199.4 43.0h13.4M214.9 43.0h4.1M220.7 43.0h9.2M232.7 43.0h6.3" stroke="#7a7a7a" stroke-width="5" opacity="0.6" fill="none"/>
<path d="M19.0 46.5h9.9M30.6 46.5h8.8M40.7 46.5h6.5M61.3 46.5h10.6M74.9 46.5h12.8M89.0 46.5h6.2M104.5 46.5h9.6M148.7 46.5h9.4M159.5 46.5h8.5M169.6 46.5h10.1M182.7 46.5h9.3M193.2 46.5h4.7M205.3 46.5h12.1M226.2 46.5h6.6" stroke="#8a8a8a" stroke-width="2.5" opacity="0.5" fill="none"/>
<path d="M19.0 53.5h12.9M33.6 53.5h7.9M42.7 53.5h12.8M58.4 53.5h7.8M67.7 53.5h3.5M73.9 53.5h6.5M83.0 53.5h6.3M92.3 53.5h8.5M102.2 53.5h7.3M111.0 53.5h6.4M119.3 53.5h11.7M132.4 53.5h6.9M142.3 53.5h6.2M149.7 53.5h8.9M160.4 53.5h3.7M166.8 53.5h6.9M175.0 53.5h6.1M182.2 53.5h10.3M206.1 53.5h12.2M220.2 53.5h12.2M233.7 53.5h5.3" stroke="#7a7a7a" stroke-width="5" opacity="0.6" fill="none"/>
<path d="M45.9 57.0h4.4M51.9 57.0h12.9M66.5 57.0h5.7M99.8 57.0h7.2M109.1 57.0h6.4M116.7 57.0h4.9M135.7 57.0h7.0M149.5 57.0h4.4M155.4 57.0h7.4M165.4 57.0h12.7M187.8 57.0h10.3M199.9 57.0h10.2M211.7 57.0h12.3M234.1 57.0h4.9" stroke="#8a8a8a" stroke-width="2.5" opacity="0.5" fill="none"/>
<path d="M19.0 67.0h3.4M23.8 67.0h6.3M31.2 67.0h6.4M39.0 67.0h12.2M53.7 67.0h5.8M71.4 67.0h11.5M84.0 67.0h12.4M105.8 67.0h5.3M113.6 67.0h3.9M119.3 67.0h11.2M132.1 67.0h4.0M137.9 67.0h13.2M153.6 67.0h12.1M167.7 67.0h3.6M173.1 67.0h8.6M196.8 67.0h11.9M210.8 67.0h13.7M234.0 67.0h5.0" stroke="#7a7a7a" stroke-width="5" opacity="0.6" fill="none"/>
<path d="M19.0 70.5h4.5M33.5 70.5h7.9M43.1 70.5h6.3M62.5 70.5h9.0M72.9 70.5h10.3M85.1 70.5h11.4M97.8 70.5h6.2M110.4 70.5h10.7M122.4 70.5h6.6M136.5 70.5h13.9M151.6 70.5h10.9M164.6 70.5h4.2M170.7 70.5h5.1M176.8 70.5h13.1M192.2 70.5h13.3M213.7 70.5h11.5M226.8 70.5h5.0" stroke="#8a8a8a" stroke-width="2.5" opacity="0.5" fill="none"/>
<path d="M19.0 78.0h12.1M32.8 78.0h5.0M39.5 78.0h7.1M48.3 78.0h12.1M61.5 78.0h9.2M73.4 78.0h10.8M87.0 78.0h8.4M96.8 78.0h6.3M104.2 78.0h10.6M131.4 78.0h7.8M141.7 78.0h3.0M147.4 78.0h11.7M160.7 78.0h10.3M172.8 78.0h6.7M181.8 78.0h12.1M195.3 78.0h6.3M203.6 78.0h6.8M211.6 78.0h6.6M221.1 78.0h13.0M237.1 78.0h1.9" stroke="#7a7a7a" stroke-width="5" opacity="0.6" fill="none"/>
<path d="M19.0 81.5h3.7M24.9 81.5h6.3M34.1 81.5h8.3M43.9 81.5h6.8M51.8 81.5h5.1M58.7 81.5h3.9M64.4 81.5h9.4M75.9 81.5h9.2M86.3 81.5h5.0M93.4 81.5h4.2M99.1 81.5h4.0M104.7 81.5h8.4M137.1 81.5h3.8M143.7 81.5h9.1M155.2 81.5h4.3M161.9 81.5h4.1M167.9 81.5h4.9M194.3 81.5h3.2M198.9 81.5h6.3M207.1 81.5h12.8M222.6 81.5h9.2M234.5 81.5h4.5" stroke="#8a8a8a" stroke-width="2.5" opacity="0.5" fill="none"/>
<path d="M19.0 89.0h11.4M33.1 89.0h4.3M39.9 89.0h13.4M80.8 89.0h10.4M92.6 89.0h7.9M108.2 89.0h11.8M122.1 89.0h6.2M130.0 89.0h4.6M136.7 89.0h10.6M150.2 89.0h3.2M154.6 89.0h8.5M165.8 89.0h3.4M171.8 89.0h10.5M184.2 89.0h4.7M190.7 89.0h12.6M204.5 89.0h6.6M224.7 89.0h7.0M233.9 89.0h5.1" stroke="#7a7a7a" stroke-width="5" opacity="0.6" fill="none"/>
<path d="M29.4 92.5h8.1M38.6 92.5h4.6M44.7 92.5h6.0M52.2 92.5h9.3M80.4 92.5h11.5M94.5 92.5h10.0M106.2 92.5h6.1M115.0 92.5h13.3M129.9 92.5h11.4M143.4 92.5h10.0M164.6 92.5h6.6M189.5 92.5h12.6M219.9 92.5h11.0M233.7 92.5h5.3" stroke="#8a8a8a" stroke-width="2.5" opacity="0.5" fill="none"/>
<rect x="23.5" y="112" width="60" height="54" fill="none" stroke="#999" stroke-width="1"/>
<path d="M24.0 114.5h3.9M30.0 114.5h13.9M46.5 114.5h7.7M55.3 114.5h8.3M72.3 114.5h5.9M79.7 114.5h4.3" stroke="#777" stroke-width="4" opacity="0.6" fill="none"/>
<path d="M24.0 127.0h12.5M37.9 127.0h11.1M51.2 127.0h3.9M65.9 127.0h8.9" stroke="#888" stroke-width="3" opacity="0.6" fill="none"/>
<path d="M24.0 135.0h11.2M37.1 135.0h10.5M58.4 135.0h6.7M67.3 135.0h5.8M74.2 135.0h9.8" stroke="#888" stroke-width="3" opacity="0.6" fill="none"/>
<path d="M24.0 145.0h3.6M30.1 145.0h6.6M38.0 145.0h4.6M43.7 145.0h12.0M57.8 145.0h9.5M69.6 145.0h9.6M81.7 145.0h2.3" stroke="#777" stroke-width="4" opacity="0.6" fill="none"/>
<path d="M24.0 155.0h11.5M38.1 155.0h13.8M53.4 155.0h8.8M63.4 155.0h3.1M68.8 155.0h11.5M83.3 155.0h0.7" stroke="#888" stroke-width="3" opacity="0.6" fill="none"/>
<path d="M24.0 164.0h3.3M28.4 164.0h8.5M38.3 164.0h13.3M52.9 164.0h5.0M68.1 164.0h5.7M75.7 164.0h8.3" stroke="#888" stroke-width="3" opacity="0.6" fill="none"/>
<path d="M23.5 120 H83.5 M23.5 140 H83.5 M23.5 150 H83.5 M45 120 V166 M64 120 V166" stroke="#aaa" stroke-width="0.7"/>
<rect x="23.5" y="177" width="60" height="63" fill="#f4f4f4" stroke="#aaa" stroke-width="1"/>
<rect x="47" y="177" width="7" height="63" fill="#9a9a9a" opacity="0.45"/>
<rect x="68" y="177" width="7" height="63" fill="#9a9a9a" opacity="0.45"/>
<path d="M23.5 177.0V240.0M43.5 177.0V240.0M63.5 177.0V240.0M83.5 177.0V240.0M23.5 177.0H83.5M23.5 183.3H83.5M23.5 189.6H83.5M23.5 195.9H83.5M23.5 202.2H83.5M23.5 208.5H83.5M23.5 214.8H83.5M23.5 221.1H83.5M23.5 227.4H83.5M23.5 233.7H83.5M23.5 240.0H83.5" stroke="#aaa" stroke-width="0.6" opacity="0.7" fill="none"/>
<path d="M50.0 62.0h7.5M79.1 62.0h4.9" stroke="#aaa" stroke-width="1.5" opacity="0.5" fill="none"/>
<path d="M240.0 28.0V130.0M255.9 28.0V130.0M275.5 28.0V130.0M289.1 28.0V130.0M307.0 28.0V130.0M240.0 28.0H307.0M240.0 39.6H307.0M240.0 49.3H307.0M240.0 63.5H307.0M240.0 74.8H307.0M240.0 83.7H307.0M240.0 97.0H307.0M240.0 108.6H307.0M240.0 117.8H307.0M240.0 130.0H307.0" stroke="#8a8a8a" stroke-width="1.0" opacity="0.7" fill="none"/>
<path d="M242.0 30.0V128.0M248.0 30.0V128.0M254.6 30.0V128.0M261.7 30.0V128.0M266.5 30.0V128.0M273.9 30.0V128.0M280.0 30.0V128.0M286.0 30.0V128.0M292.6 30.0V128.0M299.5 30.0V128.0M305.0 30.0V128.0M242.0 30.0H305.0M242.0 34.9H305.0M242.0 41.7H305.0M242.0 46.1H305.0M242.0 52.3H305.0M242.0 57.9H305.0M242.0 62.0H305.0M242.0 68.8H305.0M242.0 74.5H305.0M242.0 78.6H305.0M242.0 83.5H305.0M242.0 89.1H305.0M242.0 96.3H305.0M242.0 99.8H305.0M242.0 107.0H305.0M242.0 111.0H305.0M242.0 117.6H305.0M242.0 121.8H305.0M242.0 128.0H305.0" stroke="#a8a8a8" stroke-width="0.6" opacity="0.6" fill="none"/>
<path d="M252.6 103.3h1.9v3.0h-1.9zM299.9 105.9h5.5v5.9h-5.5zM244.1 68.3h5.1v4.6h-5.1zM244.4 89.4h2.5v3.4h-2.5zM248.6 51.6h6.0v2.9h-6.0zM297.4 59.4h3.7v2.1h-3.7zM269.0 64.0h4.6v2.2h-4.6zM288.5 89.1h2.0v3.1h-2.0zM273.3 121.7h3.1v2.5h-3.1zM303.0 118.9h4.8v2.7h-4.8zM253.2 70.6h1.8v1.7h-1.8zM274.1 81.8h4.0v3.1h-4.0zM242.7 103.7h4.4v3.9h-4.4zM276.6 103.8h5.9v5.4h-5.9zM287.2 81.1h2.9v3.4h-2.9zM303.3 80.2h3.2v3.3h-3.2zM251.0 127.9h1.5v4.2h-1.5zM300.4 69.9h4.2v3.2h-4.2zM257.2 65.5h2.0v5.3h-2.0zM291.4 120.9h1.7v4.6h-1.7zM262.4 100.4h4.0v2.9h-4.0zM303.2 50.1h4.9v5.3h-4.9zM274.1 96.2h6.0v2.6h-6.0zM281.7 108.0h3.2v4.7h-3.2zM266.8 91.0h4.3v4.5h-4.3zM262.3 99.1h3.9v2.5h-3.9zM280.6 70.7h5.6v3.6h-5.6zM287.5 90.7h3.6v2.5h-3.6zM251.0 122.3h3.9v3.9h-3.9zM275.2 113.4h2.6v2.3h-2.6zM293.8 85.9h4.4v5.2h-4.4zM298.3 117.7h1.7v3.2h-1.7zM294.4 113.8h2.1v2.2h-2.1zM257.8 58.0h3.1v5.1h-3.1zM274.8 85.3h1.9v3.3h-1.9zM304.8 104.2h3.5v3.7h-3.5zM292.3 109.2h2.2v4.6h-2.2zM265.1 90.6h2.6v3.2h-2.6zM263.4 79.7h1.6v2.4h-1.6zM277.9 54.5h2.3v4.7h-2.3zM259.3 75.3h2.6v5.3h-2.6zM247.8 99.6h5.4v2.4h-5.4zM268.7 111.8h4.3v3.2h-4.3zM244.8 84.5h3.2v4.7h-3.2zM260.6 81.8h4.4v5.1h-4.4zM264.2 80.1h4.1v5.7h-4.1zM254.1 125.8h4.7v3.2h-4.7zM283.9 75.7h1.8v4.9h-1.8zM265.9 91.0h3.7v5.6h-3.7zM289.7 52.0h4.2v3.6h-4.2zM271.1 115.5h3.4v3.6h-3.4zM298.1 84.3h3.7v3.8h-3.7zM294.0 102.3h4.8v3.3h-4.8zM244.6 103.0h4.0v5.0h-4.0zM290.5 59.2h2.5v1.8h-2.5zM293.5 57.9h1.9v4.9h-1.9zM277.6 54.3h4.6v4.7h-4.6zM272.4 54.3h4.6v3.4h-4.6zM278.8 127.9h5.2v5.4h-5.2zM251.2 76.1h3.8v1.5h-3.8zM304.3 71.4h2.7v2.9h-2.7zM258.1 117.0h4.0v3.8h-4.0zM268.5 54.0h2.9v5.4h-2.9zM292.5 116.8h2.7v2.4h-2.7zM245.3 91.9h3.2v3.6h-3.2zM272.8 95.5h3.1v5.1h-3.1zM254.6 121.7h4.0v1.7h-4.0zM261.8 91.6h3.3v4.0h-3.3zM262.4 71.3h5.1v2.8h-5.1zM286.8 112.6h4.2v3.5h-4.2z" fill="#6a6a6a" opacity="0.3"/>
<path d="M116.0 121.6V218.0M142.5 121.6V218.0M163.4 121.6V218.0M189.9 121.6V218.0M208.8 121.6V218.0M235.0 121.6V218.0M260.1 121.6V218.0M280.4 121.6V218.0M307.0 121.6V218.0M116.0 121.6H307.0M116.0 139.8H307.0M116.0 151.2H307.0M116.0 170.4H307.0M116.0 183.9H307.0M116.0 204.5H307.0M116.0 218.0H307.0" stroke="#7a7a7a" stroke-width="1.3" opacity="0.7" fill="none"/>
<path d="M118.0 124.0V216.0M125.4 124.0V216.0M133.3 124.0V216.0M139.6 124.0V216.0M147.3 124.0V216.0M154.5 124.0V216.0M160.5 124.0V216.0M167.5 124.0V216.0M176.6 124.0V216.0M181.7 124.0V216.0M191.2 124.0V216.0M196.2 124.0V216.0M203.1 124.0V216.0M210.3 124.0V216.0M219.5 124.0V216.0M227.2 124.0V216.0M232.8 124.0V216.0M240.7 124.0V216.0M246.7 124.0V216.0M255.9 124.0V216.0M262.4 124.0V216.0M268.0 124.0V216.0M274.9 124.0V216.0M284.0 124.0V216.0M289.2 124.0V216.0M298.8 124.0V216.0M305.0 124.0V216.0M118.0 124.0H305.0M118.0 129.1H305.0M118.0 134.7H305.0M118.0 141.5H305.0M118.0 146.5H305.0M118.0 152.9H305.0M118.0 157.5H305.0M118.0 165.5H305.0M118.0 169.5H305.0M118.0 176.8H305.0M118.0 180.5H305.0M118.0 188.1H305.0M118.0 194.4H305.0M118.0 198.4H305.0M118.0 203.1H305.0M118.0 209.9H305.0M118.0 216.0H305.0" stroke="#9a9a9a" stroke-width="0.7" opacity="0.6" fill="none"/>
<path d="M237.8 144.5h4.5v2.0h-4.5zM204.9 191.0h3.9v5.2h-3.9zM139.4 200.2h2.2v6.6h-2.2zM304.3 210.4h4.4v3.1h-4.4zM183.1 193.0h4.2v6.6h-4.2zM135.4 168.6h6.3v4.8h-6.3zM219.1 132.1h2.3v3.0h-2.3zM285.0 201.8h2.7v6.6h-2.7zM124.1 179.1h6.8v3.4h-6.8zM294.6 184.4h1.8v3.3h-1.8zM202.1 146.8h5.6v2.5h-5.6zM265.3 151.4h1.9v4.6h-1.9zM135.9 174.7h5.8v4.8h-5.8zM204.3 127.1h4.3v2.0h-4.3zM239.0 136.1h4.7v3.4h-4.7zM188.1 185.0h2.4v2.4h-2.4zM294.1 154.5h6.1v6.3h-6.1zM207.8 137.7h2.0v6.3h-2.0zM139.9 169.6h4.4v2.1h-4.4zM205.5 139.1h4.4v4.3h-4.4zM186.6 142.2h3.7v2.6h-3.7zM141.8 146.1h6.3v4.3h-6.3zM284.5 125.4h6.7v4.2h-6.7zM265.9 176.5h5.3v2.8h-5.3zM258.3 138.1h3.0v1.7h-3.0zM191.5 171.7h3.1v6.4h-3.1zM133.8 177.2h2.8v4.8h-2.8zM264.6 189.4h1.8v2.9h-1.8zM230.0 214.4h1.7v4.9h-1.7zM247.4 198.9h3.4v6.0h-3.4zM204.4 208.7h1.6v6.7h-1.6zM195.0 161.5h2.0v2.8h-2.0zM255.2 186.5h2.3v3.4h-2.3zM144.2 142.2h2.7v3.3h-2.7zM300.5 215.8h5.9v4.1h-5.9zM211.0 195.7h6.5v5.6h-6.5zM237.0 142.3h4.9v6.2h-4.9zM265.1 132.5h5.4v3.4h-5.4zM148.3 212.8h5.2v5.6h-5.2zM143.2 200.2h6.7v6.5h-6.7zM257.3 200.6h5.9v4.7h-5.9zM199.4 199.9h5.8v6.3h-5.8zM173.9 212.4h4.4v6.7h-4.4zM139.7 213.1h5.8v2.9h-5.8zM274.8 145.4h2.6v4.0h-2.6zM162.3 169.3h6.5v5.3h-6.5zM250.8 160.1h5.8v5.9h-5.8zM245.7 210.6h6.0v3.7h-6.0zM134.3 184.0h6.1v3.4h-6.1zM229.2 200.9h5.9v1.5h-5.9zM209.5 125.5h2.1v6.0h-2.1zM196.3 179.6h4.0v3.3h-4.0zM158.0 156.5h6.1v4.9h-6.1zM172.6 132.1h3.0v5.4h-3.0zM200.7 184.8h5.9v2.2h-5.9zM245.7 127.8h6.0v2.5h-6.0zM168.8 212.1h3.5v2.7h-3.5zM284.4 180.1h6.4v3.7h-6.4zM211.4 211.9h4.3v6.9h-4.3zM153.4 200.4h2.4v4.4h-2.4zM118.1 140.1h6.7v4.0h-6.7zM269.4 147.1h3.4v2.1h-3.4zM221.4 203.3h4.3v3.6h-4.3zM291.7 206.2h5.2v1.9h-5.2zM234.7 164.9h6.8v3.5h-6.8zM241.6 182.1h3.6v4.4h-3.6zM244.5 207.5h4.2v3.5h-4.2zM300.5 129.2h6.1v5.3h-6.1zM222.2 165.2h5.6v6.4h-5.6zM254.3 193.0h1.7v3.3h-1.7zM143.6 211.7h6.4v2.3h-6.4zM227.9 177.1h1.8v3.7h-1.8zM257.8 183.0h3.0v5.7h-3.0zM172.4 174.1h3.8v6.9h-3.8zM239.3 198.1h5.2v3.6h-5.2zM298.1 189.3h5.3v3.0h-5.3zM148.3 176.9h6.0v5.9h-6.0zM182.9 136.9h4.3v6.3h-4.3zM148.3 191.9h2.4v3.2h-2.4zM128.0 151.4h3.6v6.8h-3.6zM297.9 141.2h3.2v6.7h-3.2zM154.9 153.5h3.9v2.1h-3.9zM166.7 160.2h3.6v6.8h-3.6zM167.9 142.8h6.5v4.0h-6.5zM274.5 182.6h5.8v3.2h-5.8zM146.4 193.7h4.1v4.6h-4.1zM243.4 193.2h3.0v3.5h-3.0zM289.6 172.7h3.1v5.0h-3.1zM166.6 195.0h1.7v6.0h-1.7zM223.9 156.5h6.7v3.0h-6.7zM163.5 130.4h4.5v5.6h-4.5zM244.8 162.0h5.9v2.1h-5.9zM175.4 183.3h6.8v5.0h-6.8zM247.4 195.3h3.7v6.7h-3.7zM256.8 155.4h3.7v5.9h-3.7zM183.4 141.1h6.3v4.4h-6.3zM215.5 185.6h6.5v2.2h-6.5zM181.3 130.1h3.8v4.3h-3.8zM277.3 185.4h4.7v3.7h-4.7zM225.3 149.2h6.1v5.8h-6.1zM274.8 137.9h5.2v5.6h-5.2zM211.6 206.6h6.4v5.6h-6.4zM271.5 183.7h6.3v2.2h-6.3zM249.7 188.7h4.9v3.0h-4.9zM130.6 179.5h6.0v3.0h-6.0zM157.8 144.6h2.0v5.2h-2.0zM300.3 197.8h3.5v5.3h-3.5zM131.5 201.2h3.3v1.5h-3.3zM235.7 136.8h3.0v1.8h-3.0zM201.3 175.1h5.9v1.7h-5.9zM272.7 134.2h2.7v5.0h-2.7zM181.6 154.5h4.6v2.7h-4.6zM266.4 143.2h6.1v5.9h-6.1zM218.4 126.8h5.8v1.7h-5.8zM212.4 163.0h1.8v5.0h-1.8zM253.5 177.8h3.7v4.3h-3.7zM228.1 144.8h6.3v7.0h-6.3zM268.4 212.4h3.3v6.9h-3.3zM131.3 168.0h2.2v4.0h-2.2zM245.7 189.2h4.0v3.4h-4.0zM153.5 161.1h3.1v2.6h-3.1zM255.6 171.5h3.9v2.6h-3.9zM249.6 142.1h3.0v4.6h-3.0zM249.1 213.5h5.6v6.7h-5.6zM290.0 190.5h5.5v1.8h-5.5zM156.5 125.2h6.2v5.5h-6.2zM235.8 148.3h3.5v2.4h-3.5zM236.2 215.2h3.2v1.7h-3.2zM150.8 156.7h6.4v5.9h-6.4zM203.1 133.4h2.1v2.3h-2.1zM263.4 167.4h6.9v6.5h-6.9zM266.6 167.8h6.0v2.2h-6.0zM138.4 175.8h4.3v2.7h-4.3zM165.1 126.0h6.5v5.4h-6.5zM294.8 214.2h3.9v5.5h-3.9zM189.8 198.7h6.1v2.2h-6.1zM120.4 143.7h4.7v3.6h-4.7zM119.7 200.4h5.8v4.1h-5.8zM126.1 205.8h4.4v1.9h-4.4zM178.5 181.5h6.4v4.2h-6.4zM237.6 142.9h2.8v6.5h-2.8zM189.5 133.6h4.8v2.2h-4.8zM155.4 166.0h4.7v5.0h-4.7zM250.2 164.4h1.9v5.5h-1.9zM128.1 167.3h3.7v5.2h-3.7zM251.5 146.1h5.1v5.3h-5.1zM206.2 137.0h6.5v4.8h-6.5zM129.7 146.0h6.9v2.8h-6.9zM191.4 196.5h6.0v5.0h-6.0zM256.7 127.5h2.0v6.9h-2.0zM268.1 127.5h1.8v2.8h-1.8zM292.0 144.2h5.2v6.6h-5.2zM237.4 208.6h2.9v2.3h-2.9zM121.4 193.7h2.1v6.9h-2.1zM250.8 141.2h5.9v2.4h-5.9zM213.8 133.7h5.8v6.4h-5.8zM289.4 124.2h6.2v4.6h-6.2zM271.6 170.2h4.9v4.8h-4.9zM267.5 131.1h1.8v4.5h-1.8zM172.4 160.5h1.5v5.6h-1.5zM122.5 200.3h6.0v4.0h-6.0zM140.8 183.8h2.6v3.9h-2.6zM138.6 213.8h4.5v3.4h-4.5zM135.6 191.2h6.2v6.2h-6.2zM137.0 157.8h3.2v5.7h-3.2zM145.6 179.8h6.9v5.7h-6.9zM119.3 130.9h2.1v5.3h-2.1zM230.0 171.9h4.0v3.7h-4.0zM232.3 183.7h6.5v5.5h-6.5zM267.0 208.0h6.1v5.4h-6.1zM123.7 186.6h6.2v3.9h-6.2zM282.2 140.5h6.7v3.9h-6.7zM250.1 147.2h3.2v3.4h-3.2zM178.7 132.7h3.9v6.9h-3.9zM240.3 209.8h5.7v6.1h-5.7zM303.9 193.2h3.0v2.9h-3.0zM195.1 125.9h2.8v6.4h-2.8zM290.2 154.2h5.7v5.8h-5.7zM284.4 197.1h4.4v2.1h-4.4zM272.4 152.9h4.9v3.5h-4.9zM218.5 212.8h2.4v4.4h-2.4zM239.5 173.5h6.7v3.7h-6.7zM288.9 187.5h6.8v2.0h-6.8zM157.7 150.4h6.5v1.6h-6.5zM166.7 189.9h6.9v2.5h-6.9zM199.9 187.2h5.3v5.6h-5.3zM258.8 146.9h2.9v1.7h-2.9zM247.2 143.2h2.9v6.8h-2.9zM238.3 178.4h5.1v4.8h-5.1zM247.9 152.0h1.9v1.9h-1.9zM120.7 157.3h2.3v2.1h-2.3zM210.3 213.2h5.3v3.0h-5.3zM261.9 140.4h2.1v3.2h-2.1zM194.5 187.4h3.9v5.5h-3.9zM135.7 209.8h3.4v6.1h-3.4zM123.7 200.2h2.7v6.2h-2.7zM268.1 185.7h3.0v1.6h-3.0zM153.5 207.2h2.4v5.1h-2.4zM227.8 184.8h2.5v2.3h-2.5zM136.2 214.4h3.6v5.1h-3.6zM224.5 144.5h1.9v1.6h-1.9zM277.4 136.0h6.8v3.5h-6.8zM253.1 136.7h5.8v2.9h-5.8zM186.5 172.1h2.1v2.9h-2.1zM266.8 150.2h3.6v5.7h-3.6zM159.9 141.8h2.7v3.6h-2.7zM186.3 183.0h4.1v6.3h-4.1zM127.5 185.1h6.1v2.8h-6.1zM123.5 164.3h2.1v4.0h-2.1zM251.1 132.6h2.1v4.1h-2.1zM150.5 145.2h3.9v2.2h-3.9zM130.7 157.2h4.1v6.7h-4.1zM221.7 130.6h2.7v5.6h-2.7zM223.3 204.1h6.8v6.2h-6.8zM138.6 210.8h4.4v2.8h-4.4zM149.9 203.5h2.7v2.0h-2.7zM167.6 209.0h4.0v5.5h-4.0zM131.9 165.7h3.2v2.6h-3.2zM242.0 157.2h2.2v6.9h-2.2zM208.1 140.6h1.6v5.1h-1.6zM214.2 126.3h4.1v5.6h-4.1zM218.4 145.5h4.2v4.8h-4.2zM239.8 137.3h5.9v6.7h-5.9zM256.4 202.9h3.5v6.5h-3.5zM152.0 144.9h4.8v6.5h-4.8zM133.3 144.0h1.7v3.9h-1.7zM144.3 141.6h5.6v4.7h-5.6zM293.7 161.0h5.2v1.6h-5.2zM295.4 145.4h4.1v4.3h-4.1zM295.3 169.3h7.0v4.9h-7.0zM158.5 200.7h2.6v7.0h-2.6zM203.4 144.8h6.8v3.3h-6.8zM194.1 155.6h5.2v1.6h-5.2zM187.9 138.9h6.1v1.5h-6.1zM231.6 147.7h4.0v4.6h-4.0zM251.1 136.7h2.8v2.2h-2.8zM297.6 137.7h2.3v4.4h-2.3zM226.7 205.6h1.8v2.8h-1.8zM149.3 177.9h4.0v3.7h-4.0zM284.1 184.9h6.2v6.8h-6.2zM168.3 210.7h3.7v1.8h-3.7zM289.1 133.6h1.6v3.1h-1.6zM172.0 213.0h6.3v3.8h-6.3zM217.0 202.1h5.9v5.1h-5.9zM213.9 134.7h2.8v5.1h-2.8zM227.6 197.7h6.4v6.8h-6.4zM154.0 131.0h6.4v4.6h-6.4zM151.9 187.7h2.9v2.8h-2.9zM186.5 172.2h5.2v1.9h-5.2zM256.6 181.4h4.1v5.2h-4.1zM267.5 124.9h4.1v5.2h-4.1zM250.6 183.6h2.5v6.8h-2.5zM264.9 145.4h3.9v6.8h-3.9zM156.7 161.6h6.8v6.5h-6.8zM161.5 191.6h3.5v5.1h-3.5zM261.4 135.7h2.7v2.7h-2.7zM167.7 127.3h2.2v3.7h-2.2zM196.7 131.2h4.7v6.7h-4.7zM225.9 156.7h5.4v3.9h-5.4zM150.8 168.3h1.6v5.2h-1.6zM148.1 158.0h6.8v5.7h-6.8zM274.2 183.1h5.0v5.4h-5.0zM298.7 142.1h5.7v3.2h-5.7zM165.8 199.6h4.8v6.2h-4.8zM281.6 178.2h2.6v1.6h-2.6zM218.0 190.8h3.0v1.9h-3.0zM118.9 139.9h5.3v1.5h-5.3zM161.0 148.4h5.4v6.9h-5.4zM121.6 134.5h6.6v6.8h-6.6zM145.8 154.9h4.4v3.3h-4.4zM196.1 168.1h2.9v1.8h-2.9zM133.7 138.9h2.0v4.9h-2.0zM248.3 148.2h5.9v5.5h-5.9zM181.9 169.2h2.5v6.6h-2.5zM222.8 128.7h2.3v5.3h-2.3zM190.0 190.0h2.8v5.9h-2.8zM268.0 132.7h4.7v2.6h-4.7zM250.4 198.0h5.9v2.8h-5.9zM135.5 185.0h4.6v2.3h-4.6zM154.0 177.6h2.1v5.0h-2.1zM163.1 147.8h3.8v4.4h-3.8zM253.5 126.8h5.5v2.7h-5.5zM172.4 182.9h5.3v4.9h-5.3zM286.6 142.8h3.2v5.1h-3.2zM166.8 138.5h2.7v5.7h-2.7zM272.6 189.9h6.8v5.9h-6.8zM175.9 153.0h5.5v1.8h-5.5zM231.9 132.2h1.8v4.3h-1.8zM146.3 209.7h6.3v4.0h-6.3zM155.0 135.0h4.3v4.4h-4.3zM185.9 189.9h4.4v5.8h-4.4zM137.9 130.4h3.6v4.2h-3.6zM165.2 185.5h2.7v3.3h-2.7zM207.2 189.5h5.7v3.5h-5.7zM201.6 209.3h6.6v4.9h-6.6zM137.6 165.9h5.0v3.0h-5.0zM125.0 214.3h6.5v2.2h-6.5zM205.1 181.0h3.1v1.9h-3.1zM258.4 194.9h3.9v2.0h-3.9zM191.7 132.7h6.8v1.8h-6.8zM171.9 194.6h2.2v2.1h-2.2zM131.2 139.1h4.4v6.1h-4.4zM149.6 140.0h5.7v3.8h-5.7zM181.2 135.3h2.8v6.8h-2.8zM139.9 147.9h5.6v6.4h-5.6zM287.1 167.5h6.8v4.8h-6.8zM172.0 166.8h5.4v5.5h-5.4zM142.2 141.8h6.8v2.1h-6.8zM270.1 155.2h2.9v2.9h-2.9zM205.7 215.1h2.3v6.2h-2.3zM178.1 139.9h5.6v3.4h-5.6zM153.1 162.5h6.0v6.2h-6.0zM225.5 125.0h5.7v4.8h-5.7zM286.2 211.6h3.3v6.2h-3.3zM271.1 148.5h3.5v3.6h-3.5zM184.0 158.8h2.1v2.7h-2.1zM288.1 161.8h5.0v6.4h-5.0zM259.3 146.5h6.6v5.9h-6.6zM303.3 191.0h5.7v6.0h-5.7zM165.4 184.3h3.6v6.1h-3.6zM143.0 173.6h3.4v6.0h-3.4zM182.6 201.6h6.2v6.3h-6.2zM144.0 210.3h5.6v5.2h-5.6zM240.0 128.4h6.3v4.5h-6.3zM203.2 155.2h5.8v5.8h-5.8zM280.7 143.7h3.4v2.9h-3.4zM136.8 154.1h1.6v5.9h-1.6zM160.5 130.5h1.9v5.6h-1.9zM155.1 166.5h3.7v5.9h-3.7zM296.4 152.5h5.0v6.4h-5.0z" fill="#707070" opacity="0.3"/>
<path d="M116 218 V240 M143 218 V240 M170 218 V240 M197 218 V240 M224 218 V240 M251 218 V240 M278 218 V240 M305 218 V240" stroke="#bbb" stroke-width="0.9"/>
<path d="M118.0 226.0h8.2M128.6 226.0h6.4M137.2 226.0h4.2M144.0 226.0h8.7M154.6 226.0h12.7M192.1 226.0h3.4M197.3 226.0h10.9M209.4 226.0h8.8M244.7 226.0h13.9M260.4 226.0h10.8M281.4 226.0h5.1M301.7 226.0h3.3" stroke="#aaa" stroke-width="2" opacity="0.7" fill="none"/>
<path d="M118.0 236.0h5.0M125.1 236.0h11.4M152.4 236.0h8.5M163.7 236.0h13.5M191.5 236.0h11.8M213.3 236.0h8.6M267.3 236.0h10.9" stroke="#bbb" stroke-width="2" opacity="0.7" fill="none"/>
<path d="M95 128 V220 M330 50 V225 M95 128 H116 M307 60 H330 M307 160 H330 M307 220 H330" stroke="#aaa" stroke-width="0.8"/>
<path d="M201.2 112.5h16.5M257.6 120.6h13.9M334.4 148.7v5.7M142.7 123.4h13.5M167.8 123.5h4.4M141.3 145.8v5.0M210.1 163.8v8.3M321.8 168.4h13.1M129.7 124.5h14.9M327.1 158.5h7.9M179.5 200.2h5.6M302.4 183.0h17.4M269.8 151.4v13.1M191.4 162.7h12.4M254.1 206.6v4.6M182.8 223.5v9.5M257.5 149.3v9.0M191.6 126.4h18.3M287.1 103.9h11.2M214.0 152.7v6.8M222.7 234.8v8.2M174.8 156.1v11.6M157.5 153.7h9.2M314.1 178.1h8.7M292.1 123.2v3.2M141.4 108.6v4.6M149.7 108.4h15.5M267.8 232.0v9.1M316.3 113.0v7.8M141.3 208.5v7.2M117.4 226.6v9.6M329.4 105.5h5.1M100.2 202.7v4.2M133.9 126.2v10.4M327.7 152.3v7.8M188.8 136.7h19.6M333.8 202.4h1.2M131.5 150.9v3.6M222.3 198.7h10.5M284.8 183.5h18.0M239.2 148.9h19.0M301.3 232.7v4.6M137.0 155.6v3.1M287.5 214.0v3.1M286.5 160.0v9.3M269.8 159.3v13.5M317.9 189.2h9.4M159.5 231.0v11.7M292.1 243.7v1.3M276.8 138.0v4.7M300.8 170.9h18.7M114.9 234.9v4.6M277.7 183.1v9.5M197.5 235.3h16.2M119.7 140.1h17.8M201.0 205.3h15.4M250.7 114.1h15.3M146.5 194.9h9.3M315.8 236.7v7.7M232.2 217.2v8.0M302.3 158.2v8.2M123.5 208.6h14.6M107.8 243.3v1.7M126.5 192.3h7.2M290.6 104.8h4.5M299.3 229.5h10.9M207.6 204.2v6.8M318.9 126.9h16.1M123.8 127.0v6.7M134.3 234.8h16.4" stroke="#999" stroke-width="0.7" opacity="0.6" fill="none"/>
<rect x="309" y="229" width="39" height="14" fill="none" stroke="#999" stroke-width="1"/>
<path d="M312.0 233.0h5.8M319.2 233.0h13.0M335.1 233.0h9.9" stroke="#888" stroke-width="2" opacity="0.7" fill="none"/>
<path d="M312.0 239.0h12.4M325.6 239.0h13.1" stroke="#aaa" stroke-width="2" opacity="0.7" fill="none"/>
<path d="M60.0 248.0h12.1M74.9 248.0h4.8M90.5 248.0h8.2M100.2 248.0h7.0M122.0 248.0h7.0M132.0 248.0h4.5M139.5 248.0h7.2M152.9 248.0h6.1M161.2 248.0h13.4M176.4 248.0h13.4M191.9 248.0h12.5M206.1 248.0h9.7M218.7 248.0h5.7M225.5 248.0h3.1M241.3 248.0h10.4M254.5 248.0h13.9M275.7 248.0h13.7M291.5 248.0h3.1M297.4 248.0h9.5M315.8 248.0h4.1M321.5 248.0h12.7M335.8 248.0h13.6M351.8 248.0h3.2" stroke="#bbb" stroke-width="1.5" opacity="0.6" fill="none"/>
</g>
<g transform="translate(1324 455)"><path d="M1.2 1.2 H14 L20 7.2 V26.8 H1.2 Z" fill="#fff" stroke="#444" stroke-width="2" stroke-linejoin="round"/><path d="M14 1.2 V7.2 H20" fill="none" stroke="#444" stroke-width="1.6"/><path d="M4.5 12.5 H16.5 M4.5 16.5 H16.5 M4.5 20.5 H16.5" stroke="#444" stroke-width="1.8"/></g>
<rect x="895" y="583.6" width="364" height="257.4" fill="#a2a2a2"/>
<rect x="896" y="584.6" width="364" height="257.4" fill="#b4b4b4" opacity="0.6"/>
<rect x="893" y="581.6" width="364" height="257.4" fill="#fff"/>
<g transform="translate(893 581.6)">
<rect x="10" y="6" width="346" height="243" fill="none" stroke="#eee" stroke-width="1"/>
<defs><linearGradient id="sky" x1="0" y1="0" x2="0" y2="1"><stop offset="0" stop-color="#0b4c9e"/><stop offset="0.6" stop-color="#2a78c8"/><stop offset="1" stop-color="#6a9ad0"/></linearGradient></defs>
<rect x="22.8" y="14.3" width="119.5" height="92.5" fill="url(#sky)"/>
<g transform="translate(22.8 14.3)"><path d="M21.4 42 L36.6 22.8 L47.6 8.3 L54.6 7.6 L60 15.9 L83.6 35.2 L96 39.4 L100 56 L97.4 86 L4.8 89 Z" fill="#e9eaee"/><path d="M21.4 42 L36.6 22.8 L40 24 L40 86 L20 86 Z" fill="#cdd0d8"/><g fill="#3d414e"><path d="M40 33 L58 25 L97 37 L97 43 L58 32 L40 39 Z"/><path d="M40 45 L58 38 L97 47 L97 53 L58 45 L40 51 Z"/><path d="M40 57 L58 51 L97 58 L97 64 L58 58 L40 63 Z"/><path d="M40 67 L58 62 L97 67 L97 73 L58 69 L40 73 Z"/><path d="M22 51 L40 47 L40 51 L22 55 Z M22 63 L40 59 L40 63 L22 67 Z"/></g><path d="M70 28 V80 M84 33 V80" stroke="#e9eaee" stroke-width="2.5"/><rect x="48" y="8" width="5" height="80" fill="#f7f7f7"/><path d="M0 76 L20 72 L30 80 L100 84 L119.5 80 V92.5 H0 Z" fill="#5c5e66"/><path d="M100 50 L119.5 48 V85 L100 86 Z" fill="#7e8392"/><path d="M2 84 H40 M60 88 H95" stroke="#9a9ca4" stroke-width="2"/></g>
<path d="M167.0 14.0V83.4M176.6 14.0V83.4M186.2 14.0V83.4M195.8 14.0V83.4M205.4 14.0V83.4M215.1 14.0V83.4M224.7 14.0V83.4M234.3 14.0V83.4M243.9 14.0V83.4M253.5 14.0V83.4M263.1 14.0V83.4M272.7 14.0V83.4M282.3 14.0V83.4M291.9 14.0V83.4M301.6 14.0V83.4M311.2 14.0V83.4M320.8 14.0V83.4M330.4 14.0V83.4M340.0 14.0V83.4M167.0 14.0H340.0M167.0 21.7H340.0M167.0 29.4H340.0M167.0 37.1H340.0M167.0 44.8H340.0M167.0 52.6H340.0M167.0 60.3H340.0M167.0 68.0H340.0M167.0 75.7H340.0M167.0 83.4H340.0" stroke="#b5b5b5" stroke-width="0.6" opacity="0.8" fill="none"/>
<path d="M180.0 20.0h9.2M196.3 20.0h5.6M216.6 20.0h8.3M240.3 20.0h12.2M254.5 20.0h13.2M274.4 20.0h4.0M280.2 20.0h6.4" stroke="#999" stroke-width="2" opacity="0.6" fill="none"/>
<path d="M180.0 27.0h6.6M197.8 27.0h4.3M204.4 27.0h4.7M210.3 27.0h8.6M220.1 27.0h11.2M233.2 27.0h4.8M265.4 27.0h13.9M293.1 27.0h10.6M305.0 27.0h3.8" stroke="#aaa" stroke-width="2" opacity="0.5" fill="none"/>
<path d="M167.0 55.5 L340.0 21.0 L340.0 83.4 L167.0 83.4 Z" fill="#eee64e"/>
<path d="M185.0 83.4 L340.0 30.0 L340.0 83.4 Z" fill="#e5b347"/>
<path d="M242.0 83.4 L340.0 42.0 L340.0 83.4 Z" fill="#b7d262"/>
<path d="M282.0 83.4 L340.0 50.0 L340.0 83.4 Z" fill="#e58cb5"/>
<path d="M307.0 83.4 L340.0 56.0 L340.0 83.4 Z" fill="#3fb2e2"/>
<path d="M167 45 H340" stroke="#fff" stroke-width="0" />
<path d="M167.0 21.0V83.4M174.2 21.0V83.4M181.4 21.0V83.4M188.6 21.0V83.4M195.8 21.0V83.4M203.0 21.0V83.4M210.2 21.0V83.4M217.5 21.0V83.4M224.7 21.0V83.4M231.9 21.0V83.4M239.1 21.0V83.4M246.3 21.0V83.4M253.5 21.0V83.4M260.7 21.0V83.4M267.9 21.0V83.4M275.1 21.0V83.4M282.3 21.0V83.4M289.5 21.0V83.4M296.8 21.0V83.4M304.0 21.0V83.4M311.2 21.0V83.4M318.4 21.0V83.4M325.6 21.0V83.4M332.8 21.0V83.4M340.0 21.0V83.4M167.0 21.0H340.0M167.0 28.8H340.0M167.0 36.6H340.0M167.0 44.4H340.0M167.0 52.2H340.0M167.0 60.0H340.0M167.0 67.8H340.0M167.0 75.6H340.0M167.0 83.4H340.0" stroke="#ffffff" stroke-width="0.5" opacity="0.35" fill="none"/>
<path d="M175.0 96.0h11.0M188.3 96.0h4.7M206.8 96.0h12.6M221.0 96.0h13.0M236.7 96.0h9.5M248.5 96.0h13.4M273.7 96.0h7.1M301.3 96.0h5.0M307.9 96.0h11.5M343.7 96.0h1.3" stroke="#9cc" stroke-width="2" opacity="0.5" fill="none"/>
<path d="M175.0 101.0h8.3M194.3 101.0h7.0M211.6 101.0h10.2M245.7 101.0h8.8M270.9 101.0h4.2M287.5 101.0h8.4M298.7 101.0h12.3M330.0 101.0h13.1M344.8 101.0h0.2" stroke="#c9a" stroke-width="1.6" opacity="0.5" fill="none"/>
<path d="M255.0 108.0h5.1M261.9 108.0h4.3M268.1 108.0h6.9" stroke="#999" stroke-width="2" opacity="0.8" fill="none"/>
<path d="M25 133.4 H182 M20 122 V226" stroke="#bbb" stroke-width="1" opacity="0.24" fill="none"/>
<rect x="28" y="151" width="145" height="57" fill="#b8b8b8" opacity="0.07"/>
<path d="M28.0 151.0V208.0M37.2 151.0V208.0M51.5 151.0V208.0M63.5 151.0V208.0M73.4 151.0V208.0M87.6 151.0V208.0M102.1 151.0V208.0M111.6 151.0V208.0M125.7 151.0V208.0M137.5 151.0V208.0M147.0 151.0V208.0M158.0 151.0V208.0M173.0 151.0V208.0M28.0 151.0H173.0M28.0 161.5H173.0M28.0 170.7H173.0M28.0 178.3H173.0M28.0 187.2H173.0M28.0 200.6H173.0M28.0 208.0H173.0" stroke="#999" stroke-width="0.8" opacity="0.21" fill="none"/>
<path d="M158.2 164.6h4.1v4.1h-4.1zM75.4 154.0h3.0v4.4h-3.0zM114.9 179.5h2.1v2.5h-2.1zM73.9 174.5h3.1v5.6h-3.1zM46.4 205.3h2.6v5.4h-2.6zM64.3 183.7h3.2v1.7h-3.2zM142.3 195.8h2.7v5.0h-2.7zM97.6 205.3h1.7v3.2h-1.7zM62.1 185.7h5.0v5.3h-5.0zM107.3 172.9h5.1v2.0h-5.1zM66.7 192.6h3.5v6.0h-3.5zM42.8 176.9h2.5v1.5h-2.5zM43.2 156.9h3.2v3.4h-3.2zM101.6 167.6h4.7v3.8h-4.7zM168.4 161.1h3.8v3.7h-3.8zM82.4 198.5h2.4v5.4h-2.4zM80.4 170.1h4.3v4.0h-4.3zM70.0 156.6h5.8v3.2h-5.8zM46.1 187.5h3.9v3.0h-3.9zM76.3 197.6h3.0v3.4h-3.0zM164.9 171.5h3.3v2.2h-3.3zM123.4 187.9h3.5v3.3h-3.5zM62.8 194.7h3.6v5.2h-3.6zM82.9 191.6h1.6v2.5h-1.6zM165.4 188.8h4.5v3.7h-4.5zM96.6 162.7h2.3v4.4h-2.3zM127.8 166.0h4.4v2.1h-4.4zM116.4 161.3h3.8v2.9h-3.8zM107.6 159.2h3.7v4.3h-3.7zM49.0 168.7h4.6v4.0h-4.6zM117.0 194.1h4.1v2.5h-4.1zM92.4 196.8h4.1v4.9h-4.1zM81.3 176.2h5.9v5.2h-5.9zM122.0 157.8h4.3v1.6h-4.3zM161.7 204.5h4.8v2.7h-4.8zM149.3 161.6h5.2v3.8h-5.2zM32.2 200.1h3.5v5.2h-3.5zM127.1 180.8h5.4v2.4h-5.4zM156.7 170.3h1.6v3.0h-1.6zM39.3 155.9h4.3v2.0h-4.3zM52.5 167.8h2.8v5.6h-2.8zM157.7 199.0h6.0v3.5h-6.0zM142.2 167.2h5.7v5.1h-5.7zM133.2 164.3h1.9v5.7h-1.9zM107.9 185.1h5.4v2.1h-5.4zM128.6 177.1h5.0v3.6h-5.0zM57.7 203.6h2.8v4.9h-2.8zM147.2 165.4h4.6v3.3h-4.6zM61.6 163.7h5.8v3.2h-5.8zM101.9 179.1h1.6v4.9h-1.6zM135.1 199.3h3.1v2.4h-3.1zM79.0 191.5h4.5v3.3h-4.5zM104.0 160.3h5.6v3.6h-5.6zM101.5 194.5h2.4v4.8h-2.4zM79.8 195.9h1.9v2.7h-1.9zM119.6 178.0h3.2v4.1h-3.2zM60.7 175.6h1.5v5.1h-1.5zM65.8 196.9h4.0v4.2h-4.0zM118.3 158.8h5.0v2.8h-5.0zM151.7 194.5h4.6v5.2h-4.6zM91.6 188.4h5.8v2.4h-5.8zM44.2 174.2h3.8v2.2h-3.8zM61.2 198.8h3.2v2.2h-3.2zM55.8 183.2h2.4v3.6h-2.4zM105.8 175.7h3.8v5.3h-3.8zM32.4 202.2h2.4v1.7h-2.4zM138.2 182.8h3.9v2.5h-3.9zM140.1 168.5h4.8v2.5h-4.8zM110.8 187.0h3.2v3.7h-3.2zM39.2 186.7h4.6v2.2h-4.6zM107.6 191.6h2.0v5.3h-2.0zM152.7 154.7h2.6v1.9h-2.6zM65.6 156.7h3.7v2.6h-3.7zM72.3 176.9h3.2v5.0h-3.2zM131.9 158.2h2.5v1.5h-2.5zM76.4 157.8h4.6v5.0h-4.6zM170.4 163.3h1.7v4.9h-1.7zM88.1 202.3h3.3v2.9h-3.3zM40.2 203.2h3.8v3.5h-3.8zM91.6 193.5h5.2v3.6h-5.2zM55.1 173.9h5.5v3.3h-5.5zM123.2 182.2h3.6v4.1h-3.6zM64.6 182.1h5.4v1.9h-5.4zM82.0 199.6h5.9v1.6h-5.9zM118.4 186.1h5.3v3.6h-5.3zM48.5 168.2h4.7v4.8h-4.7zM58.8 186.7h4.5v4.5h-4.5zM33.1 175.8h3.0v4.2h-3.0zM77.5 158.9h4.5v2.8h-4.5zM141.5 168.5h4.0v5.1h-4.0zM46.3 191.5h1.8v5.7h-1.8zM33.5 191.1h3.2v2.3h-3.2zM85.7 179.1h3.4v2.1h-3.4zM103.7 168.2h5.9v3.2h-5.9zM91.4 164.3h5.9v2.9h-5.9zM121.1 197.0h3.3v4.9h-3.3zM69.3 157.9h1.7v3.5h-1.7zM153.2 163.0h3.5v4.9h-3.5zM68.9 160.2h3.8v3.4h-3.8zM162.3 200.5h2.6v4.0h-2.6zM88.7 153.8h3.5v5.6h-3.5zM72.7 183.7h4.7v1.8h-4.7zM160.3 157.9h2.9v4.7h-2.9zM32.7 172.3h2.1v3.6h-2.1zM32.2 160.2h2.5v1.9h-2.5zM42.8 162.5h3.8v2.1h-3.8zM145.8 174.5h2.6v2.6h-2.6zM148.4 154.5h4.8v1.9h-4.8zM163.2 174.0h4.2v5.4h-4.2zM44.2 155.5h4.6v4.1h-4.6z" fill="#808080" opacity="0.09"/>
<rect x="94" y="154.6" width="44" height="33" fill="#fff" opacity="0.85"/>
<path d="M28 151.5 H173 M40 207.3 H173 M173 151 V208" stroke="#6a6a6a" stroke-width="1.6" opacity="0.22" fill="none"/>
<path d="M136.8 139.9h5.8M92.7 139.9v5.9M67.6 145.0h15.0M101.8 139.2h10.6M103.1 146.1h9.2M163.3 139.8v10.2M178.5 149.2h1.5M119.8 138.9v9.2M150.5 143.8h15.9M52.2 139.6v4.9M96.7 146.0h12.9M41.2 142.7v7.3M31.7 138.7v6.8M90.8 141.2v8.8M125.8 141.6v7.9M54.1 149.3v0.7M178.8 142.5v5.3M140.1 146.0v4.0M161.3 139.7v7.6M73.4 141.2v8.8M155.9 145.4h5.3M113.0 139.0h4.5M49.0 146.0h15.7M76.0 147.9h7.0M86.2 136.2h8.7" stroke="#999" stroke-width="0.8" opacity="0.21" fill="none"/>
<path d="M27.0 220.2h3.0M173.9 212.0h3.4M40.4 218.2v3.8M63.2 212.7v6.6M178.4 220.5h1.6M28.3 218.2v3.8M110.2 219.6h11.1M66.2 214.2h13.6M113.8 219.1v2.9M167.9 219.6v2.4M168.8 213.8h8.0M134.5 221.1v0.9M170.3 219.1h9.7M142.7 213.1h12.3M150.4 212.2v9.8M44.8 210.8h8.0M172.2 222.0h7.8M122.9 211.3v4.7M36.8 214.9h10.2M88.9 221.4h15.7" stroke="#aaa" stroke-width="0.8" opacity="0.21" fill="none"/>
<path d="M28 227 H185 M71.6 207 V227" stroke="#999" stroke-width="1.2" opacity="0.24" fill="none"/>
<path d="M90.0 234.0h11.6M103.1 234.0h1.9" stroke="#999" stroke-width="2" opacity="0.24" fill="none"/>
<rect x="33" y="238" width="110" height="9" fill="#e2e2e2" opacity="0.24"/>
<path d="M221 123.5 H276 M221 123.5 V164 M276 123.5 V164" stroke="#aaa" stroke-width="0.9" opacity="0.24" fill="none"/>
<path d="M221.0 123.5V164.0M235.3 123.5V164.0M248.5 123.5V164.0M261.5 123.5V164.0M276.0 123.5V164.0M221.0 123.5H276.0M221.0 132.0H276.0M221.0 141.7H276.0M221.0 146.6H276.0M221.0 155.2H276.0M221.0 164.0H276.0" stroke="#b5b5b5" stroke-width="0.7" opacity="0.21" fill="none"/>
<path d="M221.7 127.3h1.7v3.0h-1.7zM267.0 151.8h4.9v4.4h-4.9zM253.2 147.0h1.5v2.8h-1.5zM235.4 148.6h1.7v3.4h-1.7zM241.7 143.4h2.9v1.9h-2.9zM261.2 155.9h3.6v1.9h-3.6zM254.0 158.8h5.0v4.2h-5.0zM223.5 159.1h3.8v2.5h-3.8zM271.6 157.0h4.6v2.4h-4.6zM252.7 138.8h2.5v4.2h-2.5zM254.9 136.9h3.4v4.7h-3.4zM252.2 160.5h3.5v5.0h-3.5zM222.6 142.1h3.4v4.0h-3.4zM274.3 148.7h3.2v3.7h-3.2zM250.3 152.1h4.8v1.5h-4.8zM238.6 159.0h1.7v4.3h-1.7zM222.7 149.8h4.3v2.3h-4.3zM242.0 132.7h4.0v3.4h-4.0zM254.3 136.7h3.6v4.8h-3.6zM263.9 162.0h2.4v3.3h-2.4zM242.2 137.5h4.3v2.1h-4.3zM251.7 154.8h4.8v1.6h-4.8z" fill="#777" opacity="0.12"/>
<path d="M297 123.5 H334 M297 123.5 V152.6 M334 123.5 V152.6" stroke="#aaa" stroke-width="0.9" opacity="0.24" fill="none"/>
<path d="M297.0 123.5V152.6M305.3 123.5V152.6M315.5 123.5V152.6M326.5 123.5V152.6M334.0 123.5V152.6M297.0 123.5H334.0M297.0 128.0H334.0M297.0 136.5H334.0M297.0 140.5H334.0M297.0 147.0H334.0M297.0 152.6H334.0" stroke="#b5b5b5" stroke-width="0.7" opacity="0.21" fill="none"/>
<path d="M331.3 125.4h2.7v2.0h-2.7zM302.0 132.3h4.0v3.5h-4.0zM301.5 146.8h3.3v2.0h-3.3zM327.4 147.4h2.3v4.8h-2.3zM327.0 130.2h1.5v4.5h-1.5zM327.6 126.3h4.2v4.2h-4.2zM320.4 147.7h4.9v2.6h-4.9zM327.9 150.3h2.6v3.9h-2.6zM322.3 148.2h3.5v2.5h-3.5zM306.3 139.3h2.0v4.5h-2.0zM329.9 130.6h3.9v3.9h-3.9zM301.5 146.2h4.2v2.6h-4.2zM300.6 131.7h4.2v3.1h-4.2zM327.2 128.1h1.9v2.7h-1.9zM329.6 128.2h1.8v4.1h-1.8zM300.4 142.9h1.8v2.4h-1.8zM321.6 148.9h2.9v3.1h-2.9zM298.1 133.4h2.3v4.3h-2.3zM323.4 146.3h3.4v3.9h-3.4zM301.7 134.7h2.5v2.5h-2.5zM324.4 129.7h2.6v2.5h-2.6zM329.0 142.1h3.2v2.8h-3.2z" fill="#777" opacity="0.12"/>
<path d="M205 181.7 H271 M205 181.7 V222 M271 181.7 V222" stroke="#aaa" stroke-width="0.9" opacity="0.24" fill="none"/>
<path d="M205.0 181.7V222.0M223.2 181.7V222.0M239.8 181.7V222.0M254.3 181.7V222.0M271.0 181.7V222.0M205.0 181.7H271.0M205.0 190.0H271.0M205.0 199.3H271.0M205.0 204.9H271.0M205.0 213.0H271.0M205.0 222.0H271.0" stroke="#b5b5b5" stroke-width="0.7" opacity="0.21" fill="none"/>
<path d="M211.8 201.9h4.2v2.0h-4.2zM233.5 221.6h3.2v2.8h-3.2zM260.4 217.7h2.8v1.9h-2.8zM247.0 211.5h4.7v3.8h-4.7zM225.3 202.5h2.5v3.1h-2.5zM235.9 218.5h4.7v4.7h-4.7zM236.5 220.6h2.0v4.7h-2.0zM247.3 216.9h2.9v5.0h-2.9zM206.7 215.9h4.4v2.8h-4.4zM259.7 190.3h4.1v3.1h-4.1zM232.1 189.6h4.3v4.1h-4.3zM210.9 221.1h2.3v2.8h-2.3zM232.4 204.9h4.6v4.8h-4.6zM246.8 196.4h1.9v1.7h-1.9zM239.2 205.2h3.1v4.9h-3.1zM232.3 195.8h3.0v2.1h-3.0zM267.0 205.5h3.4v3.0h-3.4zM221.5 194.4h3.2v3.1h-3.2zM269.6 204.4h2.2v1.7h-2.2zM215.5 195.6h4.2v4.6h-4.2zM220.6 213.1h3.0v3.4h-3.0zM240.2 183.4h1.7v3.8h-1.7z" fill="#777" opacity="0.12"/>
<path d="M297 181.7 H334 M297 181.7 V222 M334 181.7 V222" stroke="#aaa" stroke-width="0.9" opacity="0.24" fill="none"/>
<path d="M297.0 181.7V222.0M307.0 181.7V222.0M315.0 181.7V222.0M326.4 181.7V222.0M334.0 181.7V222.0M297.0 181.7H334.0M297.0 191.0H334.0M297.0 197.0H334.0M297.0 204.1H334.0M297.0 214.2H334.0M297.0 222.0H334.0" stroke="#b5b5b5" stroke-width="0.7" opacity="0.21" fill="none"/>
<path d="M321.2 190.7h1.7v3.2h-1.7zM298.3 211.4h3.7v2.5h-3.7zM313.5 191.1h2.2v2.1h-2.2zM327.2 200.0h4.0v2.7h-4.0zM326.9 205.7h3.8v2.9h-3.8zM317.8 189.4h4.9v3.9h-4.9zM316.7 207.4h1.9v2.7h-1.9zM305.5 215.7h1.5v3.1h-1.5zM329.1 213.2h4.0v2.6h-4.0zM305.6 210.1h2.5v4.0h-2.5zM309.9 212.4h3.5v4.4h-3.5zM333.5 197.0h5.0v1.5h-5.0zM329.5 182.9h3.4v2.9h-3.4zM325.5 194.4h2.2v4.2h-2.2zM317.4 212.2h3.2v1.6h-3.2zM325.5 190.5h3.2v1.5h-3.2zM306.6 208.5h4.2v3.7h-4.2zM313.4 211.2h3.8v2.2h-3.8zM316.8 205.8h4.1v2.2h-4.1zM308.5 195.5h1.8v2.7h-1.8zM324.0 205.0h2.1v4.1h-2.1zM301.3 212.0h2.0v1.8h-2.0z" fill="#777" opacity="0.12"/>
<path d="M221 130 h8 v6 h-8z M221 142 h8 v8 h-8z M236 128 h6 v20 h-6z" fill="#777" opacity="0.18"/>
<path d="M310 138 h6 v12 h-6z" fill="#555" opacity="0.24"/>
<path d="M274 151.8 H292 M297 152.6 H336 M205 206.7 H275 M297 207 H336" stroke="#666" stroke-width="1.6" opacity="0.21" fill="none"/>
<path d="M298 190 h34 v14 h-34z" fill="#999" opacity="0.12"/>
<path d="M245.0 175.0h5.8M252.3 175.0h9.7" stroke="#999" stroke-width="2" opacity="0.24" fill="none"/>
<path d="M310.0 175.0h11.2M323.4 175.0h1.6" stroke="#999" stroke-width="2" opacity="0.24" fill="none"/>
<path d="M225.0 231.8h3.1M229.8 231.8h5.2M237.8 231.8h3.3M242.6 231.8h2.4" stroke="#999" stroke-width="2" opacity="0.24" fill="none"/>
<path d="M310.0 231.8h5.3M317.1 231.8h4.3M322.9 231.8h2.1" stroke="#999" stroke-width="2" opacity="0.24" fill="none"/>
<path d="M274.1 203.3v6.3M336.9 205.4v7.6M242.7 127.8v8.8M205.8 221.2v3.3M302.1 140.1v11.0M246.1 170.8v4.8M290.2 162.2v4.8M303.8 116.9h4.8M213.8 174.3h14.9M205.4 185.5v4.2M224.8 202.3h17.0M244.1 159.0v6.3M344.6 217.1h5.4M340.6 125.9v10.4M309.9 182.9h17.4M206.4 204.5v6.0M299.5 160.4v3.4M339.3 157.4v7.5M320.0 147.5v3.2M268.3 121.3v9.5M258.0 227.0v3.0M203.2 195.1v8.8M192.5 221.0h11.9M320.4 144.5h16.9M233.3 116.9h17.9M308.4 136.8h16.5M296.4 180.8h9.2M341.4 112.4h3.9M349.6 124.3v11.1M307.1 117.0v7.7M268.6 129.1v10.7M211.0 215.4h7.0M228.3 166.3v8.5M332.4 172.4v12.5M224.4 114.0h7.7M209.8 161.3h16.8M267.5 215.7v10.0M311.4 147.6v5.0M278.8 182.2v4.6M245.1 209.3v12.4M208.9 136.8h13.9M309.3 188.5v8.0M280.0 220.7v9.3M284.2 170.3v8.5M210.6 162.3h9.5" stroke="#aaa" stroke-width="0.7" opacity="0.18" fill="none"/>
<path d="M190 238 H352 M190 248 H352 M277.5 232 V249 M289 232 V249 M340.5 232 V249" stroke="#bbb" stroke-width="1" opacity="0.24" fill="none"/>
<path d="M300.0 243.0h9.2M311.0 243.0h7.7M328.0 243.0h7.3" stroke="#aaa" stroke-width="1.6" opacity="0.21" fill="none"/>
</g>
<g transform="translate(903.3 805.6)"><path d="M1.2 1.2 H14 L20 7.2 V26.8 H1.2 Z" fill="#fff" stroke="#444" stroke-width="2" stroke-linejoin="round"/><path d="M14 1.2 V7.2 H20" fill="none" stroke="#444" stroke-width="1.6"/><path d="M4.5 12.5 H16.5 M4.5 16.5 H16.5 M4.5 20.5 H16.5" stroke="#444" stroke-width="1.8"/></g>
<rect x="1315.5" y="583.6" width="183" height="257" fill="#a2a2a2"/>
<rect x="1316.5" y="584.6" width="183" height="257" fill="#b4b4b4" opacity="0.6"/>
<rect x="1313.5" y="581.6" width="183" height="257" fill="#fff"/>
<g transform="translate(1313.5 581.6)">
<path d="M18.5 12.2 H164.5 M18.5 24.4 H164.5" stroke="#b9d5e5" stroke-width="1.6"/>
<path d="M20.0 18.0h12.6M34.2 18.0h5.8" stroke="#888" stroke-width="2.2" opacity="0.9" fill="none"/>
<path d="M42.0 18.0h12.8M56.3 18.0h5.8M64.7 18.0h1.3" stroke="#555" stroke-width="2.6" opacity="0.9" fill="none"/>
<path d="M120.0 18.0h11.8M134.5 18.0h4.3M141.7 18.0h10.9M153.9 18.0h3.7M158.7 18.0h3.3" stroke="#555" stroke-width="2.4" opacity="0.9" fill="none"/>
<rect x="95.5" y="34" width="71.5" height="21.3" fill="none" stroke="#999" stroke-width="0.8"/>
<path d="M95.5 40 H167 M113 34 V55.3 M131 34 V55.3 M149 34 V55.3" stroke="#aaa" stroke-width="0.7"/>
<path d="M100.0 37.0h12.8M115.0 37.0h4.1M121.0 37.0h5.7M160.8 37.0h4.2" stroke="#999" stroke-width="1.6" opacity="0.7" fill="none"/>
<path d="M18.0 44.5h6.6M25.8 44.5h7.5M35.6 44.5h1.4" stroke="#777" stroke-width="2.4" opacity="0.8" fill="none"/>
<path d="M50.8 44.5h9.2" stroke="#aaa" stroke-width="1.8" opacity="0.7" fill="none"/>
<path d="M18 47.5 H85" stroke="#c5d8e5" stroke-width="0.8"/>
<rect x="19" y="64.4" width="148.8" height="181.6" fill="none" stroke="#c3dbeb" stroke-width="1.1"/>
<path d="M19 74 H167.8 M69 74 V246 M19 159 H167.8" stroke="#c3dbeb" stroke-width="1.1"/>
<path d="M20.0 69.0h5.8M27.4 69.0h11.6M40.5 69.0h7.8M49.6 69.0h2.4" stroke="#888" stroke-width="2" opacity="0.8" fill="none"/>
<path d="M54.0 69.0h6.7M63.2 69.0h7.4M72.4 69.0h11.5M85.8 69.0h12.2" stroke="#777" stroke-width="2" opacity="0.8" fill="none"/>
<path d="M22.0 89.0h10.5M34.0 89.0h4.5M40.3 89.0h10.7M53.0 89.0h4.4" stroke="#777" stroke-width="2" opacity="0.8" fill="none"/>
<path d="M42.7 99.0h5.3M50.1 99.0h6.6M58.3 99.0h1.3" stroke="#777" stroke-width="2" opacity="0.8" fill="none"/>
<path d="M22.0 108.0h10.7M40.6 108.0h5.8M49.0 108.0h9.4M60.0 108.0h1.1" stroke="#777" stroke-width="2" opacity="0.8" fill="none"/>
<path d="M22.0 118.0h13.8M38.5 118.0h4.3M44.5 118.0h6.1" stroke="#777" stroke-width="2" opacity="0.8" fill="none"/>
<path d="M22.0 142.0h5.2M30.1 142.0h10.1M50.7 142.0h3.5M55.9 142.0h5.1" stroke="#999" stroke-width="1.6" opacity="0.7" fill="none"/>
<path d="M22.0 177.0h8.6M33.4 177.0h4.2M39.1 177.0h8.7M49.8 177.0h9.4" stroke="#777" stroke-width="2" opacity="0.8" fill="none"/>
<path d="M35.8 187.0h4.6M42.9 187.0h4.4" stroke="#777" stroke-width="2" opacity="0.8" fill="none"/>
<path d="M22.0 196.0h7.5M48.9 196.0h9.1" stroke="#777" stroke-width="2" opacity="0.8" fill="none"/>
<path d="M22.0 205.0h12.5M37.0 205.0h8.9M48.1 205.0h4.3M53.6 205.0h9.5" stroke="#777" stroke-width="2" opacity="0.8" fill="none"/>
<path d="M46.3 226.0h11.8" stroke="#aaa" stroke-width="1.8" opacity="0.7" fill="none"/>
<path d="M35.0 231.0h10.6M47.3 231.0h4.7M53.9 231.0h10.1" stroke="#aaa" stroke-width="1.8" opacity="0.7" fill="none"/>
<g transform="translate(75 82.4)"><rect width="85.2" height="59.4" fill="#c7d0dc"/><path d="M62 0 H85.2 V20 H62 Z" fill="#d5e8f2"/><path d="M0 0 H10 L12 59.4 H0 Z" fill="#8f9096"/><path d="M10 8 L35 2 L62 6 L85.2 18 V59.4 H10 Z" fill="#a9b2c0"/><path d="M12 12 L35 6 L60 10 L60 20 L35 16 L12 22 Z" fill="#e6eaee"/><path d="M12 28 L35 24 L62 28 L85 36 L85 42 L62 35 L35 31 L12 35 Z" fill="#e0e4ea"/><path d="M35 16 L62 20 L85 30 L85 36 L62 28 L35 24 Z" fill="#4a5468"/><path d="M12 36 L35 31 L62 35 L85.2 42 V59.4 H12 Z" fill="#20263a"/><path d="M62 10 L85.2 22 V35 L62 28 Z" fill="#5f7590"/></g>
<g transform="translate(75 170.4)"><rect width="64" height="61.2" fill="#c7d0dc"/><path d="M30 0 H64 V30 L50 22 L30 8 Z" fill="#d8eaf3"/><path d="M0 0 H20 L40 8 L64 35 V61.2 H0 Z" fill="#9aa4b4"/><path d="M0 18 L25 14 L45 22 L64 40 V44 L45 28 L25 22 L0 26 Z" fill="#e6e9ee"/><path d="M0 0 H16 L10 10 L0 12 Z" fill="#4a4c56"/><path d="M0 30 L25 26 L45 32 L64 46 V61.2 H0 Z" fill="#1e2436"/><path d="M40 8 L64 35 V44 L45 26 Z" fill="#5a7090"/></g>
</g>
<g transform="translate(1324.2 805.2)"><path d="M1.2 1.2 H14 L20 7.2 V26.8 H1.2 Z" fill="#fff" stroke="#444" stroke-width="2" stroke-linejoin="round"/><path d="M14 1.2 V7.2 H20" fill="none" stroke="#444" stroke-width="1.6"/><path d="M4.5 12.5 H16.5 M4.5 16.5 H16.5 M4.5 20.5 H16.5" stroke="#444" stroke-width="1.8"/></g>
</g></svg><svg width="2200" height="941" viewBox="0 0 2200 941">
<!-- app icon -->
<rect x="486" y="13.5" width="29" height="28.5" fill="#fff"/>
<text x="489.6" y="24.6" font-family="Liberation Sans" font-weight="bold" font-size="10.4" letter-spacing="0.6" fill="#000" stroke="#000" stroke-width="0.6">DW</text>
<rect x="511.5" y="20.5" width="2" height="2" fill="#555"/>
<path d="M490 33.6 L500.2 39 L504.4 28" fill="none" stroke="#0f6468" stroke-width="2.8" stroke-linejoin="miter"/>
<path d="M500.2 39 L504.4 28 L510 31.5 L513.2 23.5" fill="none" stroke="#1aa8b6" stroke-width="2.8" stroke-linejoin="miter"/>
<!-- title controls -->
<rect x="1515.5" y="31" width="16.3" height="3.5" fill="#9a9a9a"/>
<rect x="1597.4" y="19.6" width="15.7" height="16.2" fill="none" stroke="#9a9a9a" stroke-width="2"/>
<rect x="1596.4" y="18.6" width="17.7" height="4" fill="#9a9a9a"/>
<path d="M1677.8 21 L1693.6 37.2 M1693.6 21 L1677.8 37.2" stroke="#9a9a9a" stroke-width="2.3"/>

<!-- toolbar icons -->
<g fill="none" stroke="#555" stroke-width="2.6" stroke-linecap="round" stroke-linejoin="round">
  <path d="M513.5 120.3 H526.5 M505.6 128.2 V149.2 H526.5 M505.6 128.2 L513.5 120.3"/>
  <path d="M526.5 114.7 V155"/>
  <path d="M531.5 120.3 H536.5 M540.8 120.3 H543 Q545 120.3 545 122.3 V124.5 M545 128.8 V132.5 M545 136.8 V140.5 M545 144.8 V147.2 Q545 149.2 543 149.2 H540.8 M531.5 149.2 H536.5"/>
</g>
<path d="M505.6 128.2 L513.5 120.3 V125.7 Q513.5 128.2 511 128.2 Z" fill="#555"/>

<g fill="none" stroke="#c8c8c8" stroke-width="2.4" stroke-linejoin="round">
  <path d="M585.7 125.7 V120 Q585.7 118 587.7 118 H606.7 Q608.7 118 608.7 120 V125.7"/>
  <path d="M585.7 146.7 H582.6 Q580.6 146.7 580.6 144.7 V127.7 Q580.6 125.7 582.6 125.7 H612 Q614 125.7 614 127.7 V144.7 Q614 146.7 612 146.7 H608.7"/>
  <rect x="585.7" y="136.7" width="23" height="15.3" rx="2"/>
</g>
<g fill="none" stroke="#c8c8c8" stroke-width="2.4" stroke-linejoin="round" stroke-linecap="round">
  <path d="M675.2 115.4 H655.1 V155 H683.8 V123.1 Z"/>
  <path d="M669.6 125.4 V146 M660.7 138.1 L669.6 146.6 L677.9 138.1"/>
</g>
<path d="M675.2 115.4 V123.1 H683.8 Z" fill="#c8c8c8"/>

<g fill="none" stroke="#555" stroke-width="2.4" stroke-linejoin="round" stroke-linecap="round">
  <rect x="721.8" y="117.8" width="39.5" height="34.2" rx="1.8"/>
  <path d="M721.8 128.4 H761.3"/>
  <path d="M732.1 147.3 V133.7 H750.7 V147.3"/>
  <path d="M737.3 139 H745.8 M737.3 144.3 H745.8"/>
</g>
<g fill="#555"><circle cx="727.1" cy="123.1" r="1.5"/><circle cx="750.8" cy="123.1" r="1.5"/><circle cx="756.1" cy="123.1" r="1.5"/></g>

<g fill="none" stroke="#555" stroke-width="2.4" stroke-linejoin="round" stroke-linecap="round">
  <rect x="785.3" y="119.2" width="39.3" height="31.6" rx="2"/>
  <path d="M785.3 127.5 H824.6"/>
  <path d="M801.5 138 H805.4 V146.5 M802 146.8 H809"/>
</g>
<circle cx="805.4" cy="133.1" r="2.1" fill="#555"/>
<circle cx="819.6" cy="123.7" r="1.3" fill="#555"/>

<g fill="none" stroke="#c8c8c8" stroke-width="2.4" stroke-linecap="round">
  <circle cx="871.5" cy="129.5" r="11.4"/>
  <path d="M880.5 138.9 L894 152.4"/>
</g>

<g fill="none" stroke="#595959" stroke-width="2.7" stroke-linejoin="round">
  <rect x="930.8" y="116.5" width="36.1" height="35.8" rx="2.5"/>
  <path d="M942.4 116.5 V152.3 M954.3 116.5 V152.3 M930.8 128.1 H966.9 M930.8 140 H966.9"/>
</g>
<path d="M982.6 131.9 H994.5 L988.6 141.4 Z" fill="#555"/>

<g fill="none" stroke="#c8c8c8" stroke-width="2.3" stroke-linejoin="round">
  <circle cx="1040.6" cy="126.7" r="9.3"/>
  <circle cx="1040.6" cy="126.7" r="3.8"/>
  <path d="M1035.6 136 L1033.3 145 M1045.8 136 L1048 145"/>
  <path d="M1027 145.4 H1054.6 Q1058.2 145.4 1058.2 148.7 Q1058.2 152 1054.6 152 H1027 Q1023.4 152 1023.4 148.7 Q1023.4 145.4 1027 145.4 Z"/>
</g>
<g fill="none" stroke="#c8c8c8" stroke-width="2.3" stroke-linejoin="round" stroke-linecap="round">
  <path d="M1112.5 117.9 H1100 V141.6 H1118.4 V123.2 Z"/>
  <path d="M1105 129.6 H1113.7 M1105 134.9 H1113.7"/>
  <path d="M1094.7 122.9 V146.9 H1113.7"/>
  <path d="M1089.4 127.9 V152.1 H1108.1"/>
</g>
<path d="M1112.5 117.9 V123.2 H1118.4 Z" fill="#c8c8c8"/>

<g fill="none" stroke="#c8c8c8" stroke-width="2.3" stroke-linecap="round" stroke-linejoin="round">
  <path d="M1156.5 135.6 Q1160 121.8 1182 121.6" stroke-width="2.7"/>
  <path d="M1174.3 114.9 L1182.6 121.6 L1174.3 128.6"/>
  <circle cx="1184.2" cy="130.8" r="2"/>
  <circle cx="1186.7" cy="141.6" r="3.4"/>
  <path d="M1184 145 L1181 151 M1189.4 145 L1192.4 151"/>
</g>
<text x="1163.6" y="141.6" font-family="Liberation Sans" font-size="13" fill="#c8c8c8" stroke="#c8c8c8" stroke-width="0.7" transform="translate(1163.6 0) scale(0.92 1) translate(-1163.6 0)">90</text>
<rect x="1176.5" y="151.2" width="20.5" height="4.5" fill="#c8c8c8"/>
<path d="M1210 132.1 H1221.5 L1215.5 141.6 Z" fill="#c8c8c8"/>

<g fill="none" stroke="#555" stroke-width="2.9" stroke-linecap="round" stroke-linejoin="round">
  <path d="M1262.3 122.5 L1251.2 135 L1262.3 147.1 M1251.5 135 H1285.3"/>
</g>
<g fill="none" stroke="#c8c8c8" stroke-width="2.9" stroke-linecap="round" stroke-linejoin="round">
  <path d="M1336.3 122.5 L1347.5 135 L1336.3 147.1 M1347 135 H1313.3"/>
</g>
<g fill="none" stroke="#555" stroke-width="2.9" stroke-linecap="round" stroke-linejoin="round">
  <path d="M1382.7 145.5 H1411.6 Q1414.6 145.5 1414.6 142.5 V124.5 M1406.6 131.5 L1414.6 124.1 L1422.9 131.5"/>
</g>
<path d="M1439.5 148 H1448.1 L1443.7 152 Z" fill="#333"/>

<g fill="none" stroke="#c8c8c8" stroke-width="2.4" stroke-linecap="round">
  <circle cx="1505" cy="129.5" r="11.4"/>
  <path d="M1514 138.9 L1527.5 152.4"/>
</g>

<!-- tree icons -->
<g fill="none" stroke="#858585" stroke-width="2" stroke-linecap="round" stroke-linejoin="round">
  <path d="M490.9 273.2 L498.6 280.1 L490.9 286.9"/>
  <path d="M490.9 308.4 L498.6 315.3 L490.9 322.1"/>
  <path d="M490.9 343.6 L498.6 350.5 L490.9 357.3"/>
  <path d="M490.9 378.8 L498.6 385.7 L490.9 392.5"/>
  <path d="M490.6 484.3 L498.5 491.3 L490.6 498.3"/>
  <path d="M490.6 519.6 L498.5 526.5 L490.6 533.6"/>
</g>
<path d="M487.8 416.3 L494.5 423 L501.2 416.3" fill="none" stroke="#2e2e2e" stroke-width="2.6" stroke-linecap="round" stroke-linejoin="round"/>

<!-- lamp -->
<g fill="none" stroke="#555" stroke-width="1.8" stroke-linejoin="round" stroke-linecap="round">
  <path d="M515.5 255.8 H528 L526.4 252 H517.2 Z"/>
  <path d="M521 252 L519.5 244.3 L527 238.5"/>
  <path d="M526 235.3 L528.8 232.8 L537 236.4 L530.3 243.4 Z"/>
</g>
<circle cx="519.5" cy="244.3" r="1.4" fill="#555"/>

<!-- user folder -->
<g stroke="#dc5a23" stroke-width="2" stroke-linejoin="round">
  <path d="M514.3 268.4 H525.8 L527.6 272.2 H539.8 V288.5 H514.3 Z" fill="#f2c0a8"/>
</g>
<g fill="#dc5a23" stroke="#fff" stroke-width="1.6" stroke-linejoin="round">
  <path d="M522 285.8 Q522 280 525 279.2 Q523.5 277.8 523.5 276.2 Q523.5 273 526.8 273 Q530 273 530 276.2 Q530 277.8 528.6 279.2 Q532.2 280 532.2 285.8 Z"/>
</g>
<!-- link folder -->
<g stroke="#dc5a23" stroke-width="2" stroke-linejoin="round">
  <path d="M514.3 303.4 H525.8 L527.6 307.2 H539.8 V323.5 H514.3 Z" fill="#f2c0a8"/>
</g>
<g fill="#fff"><circle cx="530.6" cy="311.1" r="3.7"/><circle cx="522.5" cy="315.3" r="3.7"/><circle cx="530.6" cy="319.5" r="3.7"/></g>
<path d="M530.6 311.1 L522.5 315.3 L530.6 319.5" fill="none" stroke="#fff" stroke-width="4"/>
<path d="M530.6 311.1 L522.5 315.3 L530.6 319.5" fill="none" stroke="#dc5a23" stroke-width="1.8"/>
<g fill="#dc5a23"><circle cx="530.6" cy="311.1" r="2.3"/><circle cx="522.5" cy="315.3" r="2.5"/><circle cx="530.6" cy="319.5" r="2.3"/></g>
<!-- recycle bin -->
<g fill="none" stroke="#555" stroke-width="1.8" stroke-linejoin="round" stroke-linecap="round">
  <path d="M515 343.6 H539"/>
  <path d="M516.6 343.6 L517.2 360.5 Q517.4 363 520 363 H534 Q536.6 363 536.8 360.5 L537.4 343.6"/>
  <path d="M522.7 348.8 V357.8 M531.4 348.8 V357.8"/>
  <path d="M517.5 343 L518.8 339.3 L524.5 336.8 L526.3 338.8 L531 336.3 L536 342.6 M519 343 L526.3 338.8"/>
</g>

<!-- neighborhood -->
<g fill="#474747">
  <circle cx="521.6" cy="375.2" r="2.7"/><circle cx="532.1" cy="375.2" r="2.7"/>
  <path d="M517.5 379.8 H536 Q537.5 379.8 538 381.2 L539.6 386 L538.2 386.6 L536 383.5 L535.2 396.9 H532.6 L532 389 L531.2 396.9 H528.8 L528.6 383.2 H525.2 L525 396.9 H522.6 L521.9 389 L521.2 396.9 H518.6 L517.8 383.5 L515.6 386.6 L514.2 386 L515.8 381.2 Q516.3 379.8 517.5 379.8 Z"/>
</g>

<!-- device folder -->
<g fill="none" stroke="#555" stroke-width="1.7" stroke-linejoin="round" stroke-linecap="round">
  <path d="M517.8 411.6 V408.8 H526.6 M526.6 411.6 V408.6 L537 406.8"/>
  <rect x="517.8" y="411.6" width="19.4" height="20.2" rx="0.8"/>
  <path d="M517.8 420.6 H537.2 M517.8 425.9 H537.2"/>
  <path d="M520.6 431.8 V433.6 M534.2 431.8 V433.6"/>
</g>
<path d="M525.8 420.6 H529.2 L527.5 422.6 Z M525.8 425.9 H529.2 L527.5 427.9 Z" fill="#555"/>
<g transform="translate(32.6 35)">
<g fill="none" stroke="#555" stroke-width="1.7" stroke-linejoin="round" stroke-linecap="round">
  <path d="M517.8 411.6 V408.8 H526.6 M526.6 411.6 V408.6 L537 406.8"/>
  <rect x="517.8" y="411.6" width="19.4" height="20.2" rx="0.8"/>
  <path d="M517.8 420.6 H537.2 M517.8 425.9 H537.2"/>
  <path d="M520.6 431.8 V433.6 M534.2 431.8 V433.6"/>
</g>
<path d="M525.8 420.6 H529.2 L527.5 422.6 Z M525.8 425.9 H529.2 L527.5 427.9 Z" fill="#555"/>
</g>

<!-- search -->
<g fill="none" stroke="#555" stroke-width="2.2" stroke-linecap="round">
  <circle cx="523.4" cy="486.7" r="7.7"/>
  <path d="M529.4 492.7 L538.4 502"/>
</g>
<!-- filter -->
<g fill="none" stroke="#555" stroke-width="2" stroke-linejoin="round">
  <path d="M517.4 514.6 H536.6 L527 527.4 Z"/>
</g>
<rect x="525.2" y="526.5" width="3.8" height="10.4" fill="#555"/>

<!-- status bar icons -->
<g fill="none" stroke="#fff" stroke-width="2.3">
  <rect x="496" y="913.5" width="6" height="6" rx="0.8"/><rect x="506.5" y="913.5" width="6" height="6" rx="0.8"/>
  <rect x="496" y="924" width="6" height="6" rx="0.8"/><rect x="506.5" y="924" width="6" height="6" rx="0.8"/>
</g>
<g fill="#fff">
  <rect x="540.9" y="913.4" width="3.6" height="3.6"/><rect x="540.9" y="920.5" width="3.6" height="3.6"/><rect x="540.9" y="927.7" width="3.6" height="3.6"/>
  <rect x="546.4" y="913.8" width="16.1" height="2.8"/><rect x="546.4" y="920.9" width="16.1" height="2.8"/><rect x="546.4" y="928.1" width="16.1" height="2.8"/>
</g>
<rect x="599" y="912.3" width="21.5" height="18.2" fill="#fff"/>
<path d="M601.8 921.4 H617.7 M601.8 926.4 H617.7" stroke="#000" stroke-width="2.2" stroke-linecap="round"/>
<path d="M601.8 916.4 H617.7" stroke="#000" stroke-width="1.8" stroke-dasharray="3.5 1.2"/>
<g fill="none" stroke="#fff" stroke-width="2" stroke-linecap="round">
  <path d="M662.3 911.8 L679.5 930.9"/>
  <path d="M668 917 H660.5 V926.4 H673"/>
</g>
<g fill="#fff"><rect x="662.8" y="920" width="3.5" height="3.5"/><rect x="672" y="916" width="3" height="2.5"/><rect x="677.3" y="916" width="3" height="2.5"/><rect x="678" y="920.5" width="2.5" height="3"/></g>
<g fill="#fff">
  <path d="M720.5 930.4 H731 L728.8 926.5 H722.8 Z"/>
  <path d="M724.6 926.8 L723.5 920.5 L727.5 916.5 L729.5 917.8 L726 921.5 L727 926.8 Z"/>
  <path d="M729 914.8 L733 912 L738.6 915.5 L733.5 922.2 Z"/>
</g>
<circle cx="732.3" cy="916.6" r="1.2" fill="#222428"/>

<!-- scroll arrows -->
<path d="M1704.8 211.2 L1710 204.6 L1715.2 211.2" fill="none" stroke="#444" stroke-width="3.4" stroke-linejoin="miter"/>
<path d="M1704.8 879.2 L1710 885.8 L1715.2 879.2" fill="none" stroke="#444" stroke-width="3.4" stroke-linejoin="miter"/>
<!-- resize grip -->
<g fill="#cfcfcf">
  <rect x="1717" y="918" width="2" height="2"/>
  <rect x="1714" y="921" width="2" height="2"/><rect x="1717" y="921" width="2" height="2"/>
  <rect x="1711" y="924" width="2" height="2"/><rect x="1714" y="924" width="2" height="2"/><rect x="1717" y="924" width="2" height="2"/>
  <rect x="1708" y="927" width="2" height="2"/><rect x="1711" y="927" width="2" height="2"/><rect x="1714" y="927" width="2" height="2"/><rect x="1717" y="927" width="2" height="2"/>
  <rect x="1705" y="930" width="2" height="2"/><rect x="1708" y="930" width="2" height="2"/><rect x="1711" y="930" width="2" height="2"/><rect x="1714" y="930" width="2" height="2"/><rect x="1717" y="930" width="2" height="2"/>
</g>
</svg>
</body></html>
